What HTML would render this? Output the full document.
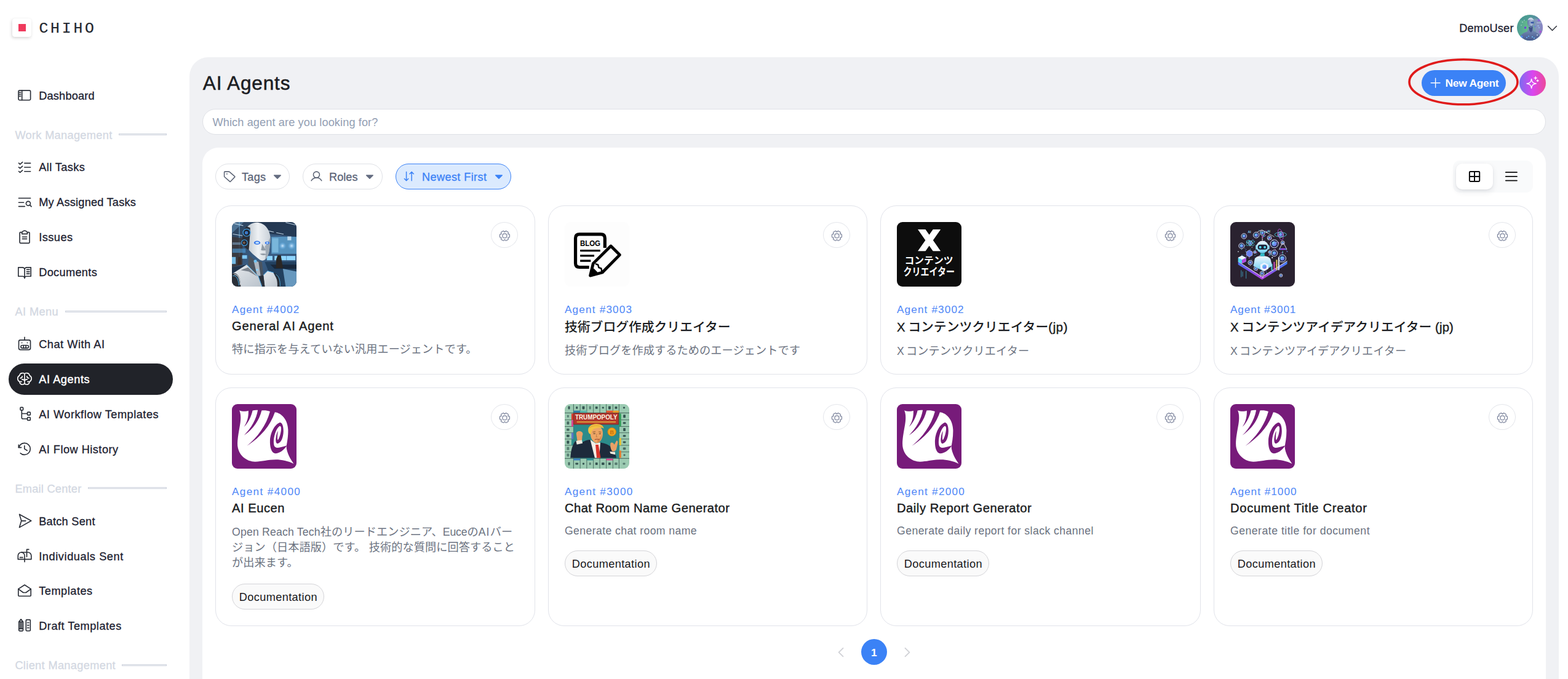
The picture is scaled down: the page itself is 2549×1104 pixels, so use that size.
<!DOCTYPE html>
<html lang="en"><head><meta charset="utf-8"><title>AI Agents - CHIHO</title>
<style>
html,body{margin:0;padding:0}
body{width:2549px;height:1104px;overflow:hidden;background:#fff;font-family:"Liberation Sans",sans-serif;}
#app{position:absolute;left:0;top:0;width:2549px;height:1104px;overflow:hidden}
.a{position:absolute;box-sizing:border-box}
.t{position:absolute;white-space:nowrap;font-family:"Liberation Sans",sans-serif}
.t span{white-space:pre}
svg{display:inline-block}
.ov{position:absolute;left:0;top:0;pointer-events:none}
.card{position:absolute;box-sizing:border-box;border:1px solid #e1e3ea;border-radius:26px;background:#fff}
.gear{position:absolute;box-sizing:border-box;width:44px;height:42px;border:1px solid #e4e6eb;border-radius:50%;background:#fff}
.pill{position:absolute;box-sizing:border-box;border:1px solid #dfe1e6;border-radius:21px;background:#fff}
.tag{position:absolute;box-sizing:border-box;border:1px solid #d4d4d8;border-radius:21px;background:#fafafa;height:41.5px}
.img{position:absolute;width:105px;height:105px;border-radius:9px;overflow:hidden}
.cj{font-family:"Liberation Sans","Noto Sans CJK JP",sans-serif}
.cd{font-size:18.2px;letter-spacing:0.07px;color:#6b7280}
.ct{font-size:20.8px;font-weight:500;color:#191b20}

</style></head>
<body>
<div id="app">
<div class="a" style="left:20px;top:30px;width:31px;height:30px;background:#fff;border-radius:4px;box-shadow:-1px 2px 5px rgba(0,0,0,.16),0 0 1px rgba(0,0,0,.08)"></div><div class="a" style="left:30px;top:39px;width:11.6px;height:11.6px;background:#ef3a5d"></div><div class="t" style="left:63.4px;top:31px;height:30px;line-height:30px;font-family:'Liberation Mono',monospace;font-size:24.7px;letter-spacing:3.85px;color:#23272f;-webkit-text-stroke:.25px #23272f">CHIHO</div><div class="a" style="left:14px;top:591px;width:267px;height:50.6px;background:#212329;border-radius:25.3px"></div><div class="a" style="left:308px;top:93px;width:2226px;height:1050px;background:#f0f1f4;border-radius:31px 31px 0 0"></div><div class="a" style="left:329px;top:177px;width:2184px;height:42px;background:#fff;border:1px solid #dfe1e6;border-radius:21px"></div><div class="a" style="left:329px;top:240px;width:2184px;height:900px;background:#fff;border-radius:26px 26px 0 0"></div><div class="pill" style="left:350px;top:266px;width:121px;height:42px"></div><div class="pill" style="left:492px;top:266px;width:130px;height:42px"></div><div class="pill" style="left:643px;top:266px;width:188px;height:42px;background:#dbeafe;border-color:#3b82f6"></div><div class="a" style="left:2362px;top:261px;width:130px;height:52px;background:#f9fafb;border-radius:11px"></div><div class="a" style="left:2367px;top:266px;width:60px;height:42px;background:#fff;border-radius:10px;box-shadow:0 4px 10px rgba(30,40,60,.10),0 1px 3px rgba(30,40,60,.06)"></div><div class="a" style="left:2311px;top:114px;width:137px;height:42px;background:#3b82f6;border-radius:21px"></div><div class="a" style="left:2470px;top:114px;width:43px;height:42px;border-radius:50%;background:linear-gradient(90deg,#7b6cf0 0%,#d946ef 50%,#ec4899 100%)"></div><div class="a" style="left:1400px;top:1039px;width:42px;height:42px;background:#3b82f6;border-radius:50%"></div><div class="card" style="left:350px;top:334px;width:520px;height:275px"></div><div class="gear" style="left:798px;top:361px"></div><div class="card" style="left:891px;top:334px;width:519px;height:275px"></div><div class="gear" style="left:1338px;top:361px"></div><div class="card" style="left:1431px;top:334px;width:521px;height:275px"></div><div class="gear" style="left:1880px;top:361px"></div><div class="card" style="left:1973px;top:334px;width:519px;height:275px"></div><div class="gear" style="left:2420px;top:361px"></div><div class="card" style="left:350px;top:630px;width:520px;height:388px"></div><div class="gear" style="left:798px;top:657px"></div><div class="tag" style="left:377px;top:949.3px;width:150px"></div><div class="card" style="left:891px;top:630px;width:519px;height:388px"></div><div class="gear" style="left:1338px;top:657px"></div><div class="tag" style="left:918px;top:895.3px;width:150px"></div><div class="card" style="left:1431px;top:630px;width:521px;height:388px"></div><div class="gear" style="left:1880px;top:657px"></div><div class="tag" style="left:1458px;top:895.3px;width:150px"></div><div class="card" style="left:1973px;top:630px;width:519px;height:388px"></div><div class="gear" style="left:2420px;top:657px"></div><div class="tag" style="left:2000px;top:895.3px;width:150px"></div><div class="a" style="left:192.9px;top:216.9px;width:78.1px;height:3.3px;border:1px solid #cfd4de;background:#f1f3f6"></div><div class="a" style="left:106px;top:504.7px;width:165px;height:3.3px;border:1px solid #cfd4de;background:#f1f3f6"></div><div class="a" style="left:143.2px;top:791.9px;width:127.8px;height:3.3px;border:1px solid #cfd4de;background:#f1f3f6"></div><div class="a" style="left:198.1px;top:1080px;width:72.9px;height:3.3px;border:1px solid #cfd4de;background:#f1f3f6"></div><div class="t" style="left:2372.2px;top:34px;height:24px;line-height:24px;font-size:18.16px;"><span style="font-size:18.16px;letter-spacing:0.211px;color:#1c2130;-webkit-text-stroke:0.3px #1c2130;">DemoUser</span></div>
<div class="t" style="left:63.2px;top:144px;height:24px;line-height:24px;font-size:18.16px;"><span style="font-size:18.16px;letter-spacing:0.214px;color:#1c2130;-webkit-text-stroke:0.3px #1c2130;">Dashboard</span></div>
<div class="t" style="left:63.2px;top:260px;height:24px;line-height:24px;font-size:18.16px;"><span style="font-size:18.16px;letter-spacing:0.420px;color:#1c2130;-webkit-text-stroke:0.3px #1c2130;">All Tasks</span></div>
<div class="t" style="left:63.2px;top:317px;height:24px;line-height:24px;font-size:18.16px;"><span style="font-size:18.16px;letter-spacing:0.227px;color:#1c2130;-webkit-text-stroke:0.3px #1c2130;">My Assigned Tasks</span></div>
<div class="t" style="left:63.2px;top:374px;height:24px;line-height:24px;font-size:18.16px;"><span style="font-size:18.16px;letter-spacing:0.495px;color:#1c2130;-webkit-text-stroke:0.3px #1c2130;">Issues</span></div>
<div class="t" style="left:63.2px;top:431px;height:24px;line-height:24px;font-size:18.16px;"><span style="font-size:18.16px;letter-spacing:0.344px;color:#1c2130;-webkit-text-stroke:0.3px #1c2130;">Documents</span></div>
<div class="t" style="left:63.2px;top:548px;height:24px;line-height:24px;font-size:18.16px;"><span style="font-size:18.16px;letter-spacing:0.535px;color:#1c2130;-webkit-text-stroke:0.3px #1c2130;">Chat With AI</span></div>
<div class="t" style="left:63.2px;top:605px;height:24px;line-height:24px;font-size:18.16px;"><span style="font-size:18.16px;letter-spacing:0.594px;color:#ffffff;-webkit-text-stroke:0.45px #ffffff;">AI Agents</span></div>
<div class="t" style="left:63.2px;top:662px;height:24px;line-height:24px;font-size:18.16px;"><span style="font-size:18.16px;letter-spacing:0.523px;color:#1c2130;-webkit-text-stroke:0.3px #1c2130;">AI Workflow Templates</span></div>
<div class="t" style="left:63.2px;top:719px;height:24px;line-height:24px;font-size:18.16px;"><span style="font-size:18.16px;letter-spacing:0.487px;color:#1c2130;-webkit-text-stroke:0.3px #1c2130;">AI Flow History</span></div>
<div class="t" style="left:63.2px;top:836px;height:24px;line-height:24px;font-size:18.16px;"><span style="font-size:18.16px;letter-spacing:0.273px;color:#1c2130;-webkit-text-stroke:0.3px #1c2130;">Batch Sent</span></div>
<div class="t" style="left:63.2px;top:893px;height:24px;line-height:24px;font-size:18.16px;"><span style="font-size:18.16px;letter-spacing:0.595px;color:#1c2130;-webkit-text-stroke:0.3px #1c2130;">Individuals Sent</span></div>
<div class="t" style="left:63.2px;top:949px;height:24px;line-height:24px;font-size:18.16px;"><span style="font-size:18.16px;letter-spacing:0.533px;color:#1c2130;-webkit-text-stroke:0.3px #1c2130;">Templates</span></div>
<div class="t" style="left:63.2px;top:1006px;height:24px;line-height:24px;font-size:18.16px;"><span style="font-size:18.16px;letter-spacing:0.521px;color:#1c2130;-webkit-text-stroke:0.3px #1c2130;">Draft Templates</span></div>
<div class="t" style="left:24.4px;top:208px;height:24px;line-height:24px;font-size:18.16px;"><span style="font-size:18.16px;letter-spacing:0.339px;color:#d3d8e2;-webkit-text-stroke:0.3px #d3d8e2;">Work Management</span></div>
<div class="t" style="left:24.4px;top:495px;height:24px;line-height:24px;font-size:18.16px;"><span style="font-size:18.16px;letter-spacing:0.434px;color:#d3d8e2;-webkit-text-stroke:0.3px #d3d8e2;">AI Menu</span></div>
<div class="t" style="left:24.4px;top:783px;height:24px;line-height:24px;font-size:18.16px;"><span style="font-size:18.16px;letter-spacing:0.262px;color:#d3d8e2;-webkit-text-stroke:0.3px #d3d8e2;">Email Center</span></div>
<div class="t" style="left:24.4px;top:1070px;height:24px;line-height:24px;font-size:18.16px;"><span style="font-size:18.16px;letter-spacing:0.364px;color:#d3d8e2;-webkit-text-stroke:0.3px #d3d8e2;">Client Management</span></div>
<div class="t" style="left:329.8px;top:114.5px;height:41px;line-height:41px;font-size:31.62px;"><span style="font-size:31.62px;letter-spacing:0.799px;color:#1b1d22;-webkit-text-stroke:0.5px #1b1d22;">AI Agents</span></div>
<div class="t" style="left:345.5px;top:187px;height:24px;line-height:24px;font-size:18.16px;"><span style="font-size:18.16px;letter-spacing:0.111px;color:#929eb3;">Which agent are you looking for?</span></div>
<div class="t" style="left:393px;top:276px;height:24px;line-height:24px;font-size:18.16px;"><span style="font-size:18.16px;letter-spacing:0.266px;color:#5b6478;-webkit-text-stroke:0.3px #5b6478;">Tags</span></div>
<div class="t" style="left:535px;top:276px;height:24px;line-height:24px;font-size:18.16px;"><span style="font-size:18.16px;letter-spacing:0.028px;color:#5b6478;-webkit-text-stroke:0.3px #5b6478;">Roles</span></div>
<div class="t" style="left:686px;top:276px;height:24px;line-height:24px;font-size:18.16px;"><span style="font-size:18.16px;letter-spacing:0.375px;color:#3b82f6;-webkit-text-stroke:0.3px #3b82f6;">Newest First</span></div>
<div class="t" style="left:2349.6px;top:123px;height:24px;line-height:24px;font-size:18.16px;"><span style="font-size:17.41px;letter-spacing:-0.291px;color:#ffffff;font-weight:700;">New Agent</span></div>
<div class="t" style="left:1415.88px;top:1049px;height:24px;line-height:24px;font-size:18.16px;"><span style="font-size:17.41px;letter-spacing:-1.438px;color:#ffffff;font-weight:700;">1</span></div>
<div class="t" style="left:388.8px;top:959px;height:24px;line-height:24px;font-size:18.16px;"><span style="font-size:18.16px;letter-spacing:0.383px;color:#18181b;">Documentation</span></div>
<div class="t" style="left:929.8px;top:905px;height:24px;line-height:24px;font-size:18.16px;"><span style="font-size:18.16px;letter-spacing:0.383px;color:#18181b;">Documentation</span></div>
<div class="t" style="left:1469.8px;top:905px;height:24px;line-height:24px;font-size:18.16px;"><span style="font-size:18.16px;letter-spacing:0.383px;color:#18181b;">Documentation</span></div>
<div class="t" style="left:2011.8px;top:905px;height:24px;line-height:24px;font-size:18.16px;"><span style="font-size:18.16px;letter-spacing:0.383px;color:#18181b;">Documentation</span></div>
<div class="t" style="left:377px;top:492px;height:22px;line-height:22px;font-size:17.15px;"><span style="font-size:17.15px;letter-spacing:1.203px;color:#4d86f7;">Agent #4002</span></div>
<div class="t" style="left:377px;top:517px;height:26px;line-height:26px;font-size:20.18px;"><span style="font-size:20.18px;letter-spacing:0.827px;color:#191b20;-webkit-text-stroke:0.4px #191b20;">General AI Agent</span></div>
<div class="t cj" style="left:377px;top:557.2px;height:23px;line-height:23px;font-size:18.2px;"><span class="cj cd">特に指示を与えていない汎用エージェントです。</span></div>
<div class="t" style="left:918px;top:492px;height:22px;line-height:22px;font-size:17.15px;"><span style="font-size:17.15px;letter-spacing:1.186px;color:#4d86f7;">Agent #3003</span></div>
<div class="t cj" style="left:918px;top:518.8px;height:26px;line-height:26px;font-size:20.8px;"><span class="cj ct">技術ブログ作成クリエイター</span></div>
<div class="t cj" style="left:918px;top:559.2px;height:23px;line-height:23px;font-size:18.2px;"><span class="cj cd">技術ブログを作成するためのエージェントです</span></div>
<div class="t" style="left:1458px;top:492px;height:22px;line-height:22px;font-size:17.15px;"><span style="font-size:17.15px;letter-spacing:1.142px;color:#4d86f7;">Agent #3002</span></div>
<div class="t" style="left:1458px;top:519px;height:26px;line-height:26px;font-size:20.18px;"><span style="font-size:20.18px;letter-spacing:-0.395px;color:#191b20;-webkit-text-stroke:0.4px #191b20;">X </span><span class="cj ct">コンテンツクリエイター</span><span style="font-size:20.18px;letter-spacing:0.703px;color:#191b20;-webkit-text-stroke:0.4px #191b20;">(jp)</span></div>
<div class="t" style="left:1458px;top:559.5px;height:23px;line-height:23px;font-size:17.65px;"><span style="font-size:17.65px;letter-spacing:-0.817px;color:#6b7280;">X </span><span class="cj cd">コンテンツクリエイター</span></div>
<div class="t" style="left:2000px;top:492px;height:22px;line-height:22px;font-size:17.15px;"><span style="font-size:17.15px;letter-spacing:0.915px;color:#4d86f7;">Agent #3001</span></div>
<div class="t" style="left:2000px;top:519px;height:26px;line-height:26px;font-size:20.18px;"><span style="font-size:20.18px;letter-spacing:-0.395px;color:#191b20;-webkit-text-stroke:0.4px #191b20;">X </span><span class="cj ct">コンテンツアイデアクリエイター</span><span style="font-size:20.18px;letter-spacing:0.166px;color:#191b20;-webkit-text-stroke:0.4px #191b20;"> (jp)</span></div>
<div class="t" style="left:2000px;top:559.5px;height:23px;line-height:23px;font-size:17.65px;"><span style="font-size:17.65px;letter-spacing:-0.817px;color:#6b7280;">X </span><span class="cj cd">コンテンツアイデアクリエイター</span></div>
<div class="t" style="left:377px;top:788px;height:22px;line-height:22px;font-size:17.15px;"><span style="font-size:17.15px;letter-spacing:1.364px;color:#4d86f7;">Agent #4000</span></div>
<div class="t" style="left:377px;top:813px;height:26px;line-height:26px;font-size:20.18px;"><span style="font-size:20.18px;letter-spacing:0.529px;color:#191b20;-webkit-text-stroke:0.4px #191b20;">AI Eucen</span></div>
<div class="t" style="left:377px;top:853.5px;height:23px;line-height:23px;font-size:17.65px;"><span style="font-size:17.65px;letter-spacing:0.190px;color:#6b7280;">Open Reach Tech</span><span class="cj cd">社のリードエンジニア、</span><span style="font-size:17.65px;letter-spacing:-0.152px;color:#6b7280;">Euce</span><span class="cj cd">の</span><span style="font-size:17.65px;letter-spacing:1.172px;color:#6b7280;">AI</span><span class="cj cd">バー</span></div>
<div class="t" style="left:377px;top:878.5px;height:23px;line-height:23px;font-size:17.65px;"><span class="cj cd">ジョン（日本語版）です。</span><span style="font-size:17.65px;letter-spacing:0.438px;color:#6b7280;"> </span><span class="cj cd">技術的な質問に回答すること</span></div>
<div class="t cj" style="left:377px;top:904.2px;height:23px;line-height:23px;font-size:18.2px;"><span class="cj cd">が出来ます。</span></div>
<div class="t" style="left:918px;top:788px;height:22px;line-height:22px;font-size:17.15px;"><span style="font-size:17.15px;letter-spacing:1.303px;color:#4d86f7;">Agent #3000</span></div>
<div class="t" style="left:918px;top:813px;height:26px;line-height:26px;font-size:20.18px;"><span style="font-size:20.18px;letter-spacing:0.437px;color:#191b20;-webkit-text-stroke:0.4px #191b20;">Chat Room Name Generator</span></div>
<div class="t" style="left:918px;top:851.5px;height:23px;line-height:23px;font-size:17.65px;"><span style="font-size:17.65px;letter-spacing:0.392px;color:#6b7280;">Generate chat room name</span></div>
<div class="t" style="left:1458px;top:788px;height:22px;line-height:22px;font-size:17.15px;"><span style="font-size:17.15px;letter-spacing:1.257px;color:#4d86f7;">Agent #2000</span></div>
<div class="t" style="left:1458px;top:813px;height:26px;line-height:26px;font-size:20.18px;"><span style="font-size:20.18px;letter-spacing:0.533px;color:#191b20;-webkit-text-stroke:0.4px #191b20;">Daily Report Generator</span></div>
<div class="t" style="left:1458px;top:851.5px;height:23px;line-height:23px;font-size:17.65px;"><span style="font-size:17.65px;letter-spacing:0.430px;color:#6b7280;">Generate daily report for slack channel</span></div>
<div class="t" style="left:2000px;top:788px;height:22px;line-height:22px;font-size:17.15px;"><span style="font-size:17.15px;letter-spacing:1.031px;color:#4d86f7;">Agent #1000</span></div>
<div class="t" style="left:2000px;top:813px;height:26px;line-height:26px;font-size:20.18px;"><span style="font-size:20.18px;letter-spacing:0.694px;color:#191b20;-webkit-text-stroke:0.4px #191b20;">Document Title Creator</span></div>
<div class="t" style="left:2000px;top:851.5px;height:23px;line-height:23px;font-size:17.65px;"><span style="font-size:17.65px;letter-spacing:0.492px;color:#6b7280;">Generate title for document</span></div><svg class="ov" width="2549" height="1104" viewBox="0 0 2549 1104" fill="none" stroke-linecap="round" stroke-linejoin="round"><g stroke="#2a2e37" stroke-width="1.65"><rect x="30" y="147.1" width="19.6" height="15.6" rx="1.6"/><path d="M35.7 147.1V162.7M31.6 150.3h2M31.6 153.3h2M31.6 156.4h2"/><path d="M39.8 265.3H49.6M39.8 272H49.6M39.8 278.7H49.6M30.5 265.2l2.1 1.9 4-3.5M30.5 271.8l2.1 1.9 4-3.5M30.5 278.5l2.1 1.9 4-3.5"/><path d="M30.4 322.2H49.6M30.4 329.2H38.6M30.4 335.6H40.3M48.5 333.4L51 335.9"/><circle cx="45.9" cy="330.8" r="3.5"/><path d="M35.6 377.6H33.4a1.3 1.3 0 0 0-1.3 1.3V394a1.3 1.3 0 0 0 1.3 1.3H46.7a1.3 1.3 0 0 0 1.3-1.3V378.9a1.3 1.3 0 0 0-1.3-1.3H44.5"/><path d="M35.6 380.3V379.6a4.45 4.45 0 0 1 8.9 0V380.3Z"/><path d="M36.4 385.2H43.6M36.4 388.3H43.6"/><path d="M40 438.2a3.4 3.4 0 0 0-3.4-3.4H29.8V449.2H36.6a3.4 3.4 0 0 1 3.4 3.4a3.4 3.4 0 0 1 3.4-3.4H50.2V434.8H43.4a3.4 3.4 0 0 0-3.4 3.4V452.6"/><path d="M43.4 438.4H48M43.4 441.8H48M43.4 445.1H48"/><rect x="30.5" y="552.8" width="19" height="15.8" rx="2.6"/><path d="M40 548.2V552.8M38.3 561.5v4.4M42.1 561.5v4.4"/><rect x="33.9" y="561.5" width="12.6" height="4.4" rx="2.2"/><circle cx="35.6" cy="557.3" r="0.9" fill="#2a2e37" stroke="none"/><circle cx="44.4" cy="557.3" r="0.9" fill="#2a2e37" stroke="none"/><rect x="33" y="662.4" width="4.6" height="4.6" rx="1"/><rect x="44.5" y="670.1" width="4.8" height="4.8" rx="1"/><rect x="44.5" y="678.6" width="4.8" height="4.8" rx="1"/><path d="M35.3 667V679a2 2 0 0 0 2 2H44.5M35.3 672.5H44.5"/><path d="M39.8 724.8V729.9L44.1 732.5M34.6 727.6H30.3V723.3"/><path d="M33.2 736.8A9.5 9.5 0 1 0 33 723.2L30.3 727.6"/><path d="M31.5 836.2L50.7 846.8L31.5 857.6L34.8 846.8ZM34.8 846.8H41.8"/><path d="M29.3 909.4V903.6a5.6 5.6 0 0 1 5.6-5.6H45.2a5.6 5.6 0 0 1 5.6 5.6V909.4Z"/><path d="M40 913.6V903.6a5.4 5.4 0 0 0-5.2-5.6M43.5 905.3V893.3H46.9M32.4 906.4H37"/><path d="M29.8 957.6L40 951L50.2 957.6V967.9a1.3 1.3 0 0 1-1.3 1.3H31.1a1.3 1.3 0 0 1-1.3-1.3Z"/><path d="M29.8 957.6L37.8 963.5H42.2L50.2 957.6"/><path d="M30.7 1011L34.1 1006.9L37.5 1011V1024.4a1.4 1.4 0 0 1-1.4 1.4H32.1a1.4 1.4 0 0 1-1.4-1.4ZM30.7 1022.4H37.5M30.7 1011H37.5M32.9 1011V1022.4M35.3 1011V1022.4"/><rect x="42.3" y="1007.6" width="7" height="18.2" rx="1.3"/><path d="M44.6 1012.5h2.3M44.6 1016.6h2.3M44.6 1020.7h2.3"/></g><g stroke="#ffffff" stroke-width="1.6"><path d="M39.95 608.21C39.01 606.47 37.22 606.24 35.81 606.65C33.56 607.11 32.05 608.58 31.87 610.51C29.7 611.53 28.67 613.55 28.76 615.48C28.76 618.06 30.08 619.81 31.96 620.63C31.87 623.21 33.84 625.19 36.28 625.19C38.07 625.19 39.67 624.13 39.95 622.66M32.9 614.84C34.78 614.84 36.1 613.46 36.1 611.8M39.95 619.16C39.48 617.69 37.88 616.86 35.63 616.86M31.96 620.63L35.06 620.63M39.95 608.21C40.89 606.47 42.68 606.24 44.09 606.65C46.34 607.11 47.85 608.58 48.03 610.51C50.2 611.53 51.23 613.55 51.14 615.48C51.14 618.06 49.82 619.81 47.94 620.63C48.03 623.21 46.06 625.19 43.62 625.19C41.83 625.19 40.23 624.13 39.95 622.66M47 614.84C45.12 614.84 43.8 613.46 43.8 611.8M39.95 619.16C40.42 617.69 42.02 616.86 44.27 616.86M47.94 620.63L44.84 620.63M39.95 608.2V623.7"/></g><path d="M2516.6 42.4L2523.5 49.6L2530.4 42.4" stroke="#2a2e37" stroke-width="1.4"/><g stroke="#5c6475" stroke-width="1.55"><path d="M365.4 279.1H372.3a1 1 0 0 1 .7.3L381.6 286.8a.8.8 0 0 1 0 1.1L374.6 295.2a.8.8 0 0 1-1.1 0L364.9 287.5a1 1 0 0 1-.3-.7V279.9a.8.8 0 0 1 .8-.8Z"/><circle cx="368.9" cy="282.8" r="0.95" fill="#5c6475" stroke="none"/><circle cx="514.45" cy="284.1" r="5.0"/><path d="M506.1 293.8C507.8 290.6 510.8 289 514.45 289S521.1 290.6 522.8 293.8"/></g><path d="M445.6 284.2H456.3a.7.7 0 0 1 .5 1.2L451.5 290.8a.8.8 0 0 1-1.1 0L445.1 285.4a.7.7 0 0 1 .5-1.2Z" fill="#646c80"/><path d="M595.6 284.2H606.3a.7.7 0 0 1 .5 1.2L601.5 290.8a.8.8 0 0 1-1.1 0L595.1 285.4a.7.7 0 0 1 .5-1.2Z" fill="#646c80"/><path d="M805.6 284.2H816.3a.7.7 0 0 1 .5 1.2L811.5 290.8a.8.8 0 0 1-1.1 0L805.1 285.4a.7.7 0 0 1 .5-1.2Z" fill="#3b82f6"/><path d="M660.6 279.5V293.8M657.4 290.5L660.6 293.8L663.8 290.5M669.2 293.8V279.5M666 282.8L669.2 279.5L672.4 282.8" stroke="#3b82f6" stroke-width="1.5"/><rect x="2388.9" y="278.9" width="16.3" height="16" rx="1.3" stroke="#0c0c0d" stroke-width="2"/><path d="M2397 278.9V294.9M2388.9 286.9H2405.2" stroke="#0c0c0d" stroke-width="2"/><path d="M2447.8 280.2H2466M2447.8 286.9H2466M2447.8 293.6H2466" stroke="#0c0c0d" stroke-width="1.7"/><path d="M2326.2 134.7H2341M2333.6 127.2V142.2" stroke="#fff" stroke-width="1.35"/><g stroke="#fff" stroke-width="1.35"><path d="M2489.6 128.4C2490.2 133.4 2491.6 134.9 2497.3 135.9C2491.6 136.9 2490.2 138.4 2489.6 143.6C2489 138.4 2487.6 136.9 2481.9 135.9C2487.6 134.9 2489 133.4 2489.6 128.4Z"/><path d="M2496.2 124.6V129M2494 126.8H2498.4M2499.6 129.8V132.6M2498.2 131.2H2501"/></g><ellipse cx="2379" cy="133.3" rx="88" ry="36.5" stroke="#e01b1b" stroke-width="3.6"/><path d="M1370.5 1053.8L1363.6 1060.6L1370.5 1067.4M1471.5 1053.8L1478.4 1060.6L1471.5 1067.4" stroke="#d0d1d6" stroke-width="1.8"/><g stroke="#79819a" stroke-width="1.2"><path d="M828.45 383.4 L828.45 382.98 L828.45 382.56 L828.44 382.13 L828.42 381.71 L828.32 381.29 L828.05 380.93 L827.51 380.69 L826.73 380.6 L826.01 380.57 L825.77 380.33 L825.68 380 L826.01 379.36 L826.32 378.64 L826.39 378.05 L826.21 377.64 L825.9 377.35 L825.54 377.11 L825.18 376.89 L824.81 376.68 L824.45 376.47 L824.09 376.26 L823.72 376.05 L823.35 375.84 L822.97 375.65 L822.56 375.53 L822.11 375.59 L821.63 375.93 L821.17 376.56 L820.78 377.17 L820.45 377.26 L820.12 377.17 L819.73 376.56 L819.27 375.93 L818.79 375.59 L818.34 375.53 L817.93 375.65 L817.55 375.84 L817.18 376.05 L816.81 376.26 L816.45 376.47 L816.09 376.68 L815.72 376.89 L815.36 377.11 L815 377.35 L814.69 377.64 L814.51 378.05 L814.58 378.64 L814.89 379.36 L815.22 380 L815.13 380.33 L814.89 380.57 L814.17 380.6 L813.39 380.69 L812.85 380.93 L812.58 381.29 L812.48 381.71 L812.46 382.13 L812.45 382.56 L812.45 382.98 L812.45 383.4 L812.45 383.82 L812.45 384.24 L812.46 384.67 L812.48 385.09 L812.58 385.51 L812.85 385.87 L813.39 386.11 L814.17 386.2 L814.89 386.23 L815.13 386.47 L815.22 386.8 L814.89 387.44 L814.58 388.16 L814.51 388.75 L814.69 389.16 L815 389.45 L815.36 389.69 L815.72 389.91 L816.09 390.12 L816.45 390.33 L816.81 390.54 L817.18 390.75 L817.55 390.96 L817.93 391.15 L818.34 391.27 L818.79 391.21 L819.27 390.87 L819.73 390.24 L820.12 389.63 L820.45 389.54 L820.78 389.63 L821.17 390.24 L821.63 390.87 L822.11 391.21 L822.56 391.27 L822.97 391.15 L823.35 390.96 L823.72 390.75 L824.09 390.54 L824.45 390.33 L824.81 390.12 L825.18 389.91 L825.54 389.69 L825.9 389.45 L826.21 389.16 L826.39 388.75 L826.32 388.16 L826.01 387.44 L825.68 386.8 L825.77 386.47 L826.01 386.23 L826.73 386.2 L827.51 386.11 L828.05 385.87 L828.32 385.51 L828.42 385.09 L828.44 384.67 L828.45 384.24 L828.45 383.82Z"/><circle cx="820.45" cy="383.4" r="3.5"/><path d="M1368.45 383.4 L1368.45 382.98 L1368.45 382.56 L1368.44 382.13 L1368.42 381.71 L1368.32 381.29 L1368.05 380.93 L1367.51 380.69 L1366.73 380.6 L1366.01 380.57 L1365.77 380.33 L1365.68 380 L1366.01 379.36 L1366.32 378.64 L1366.39 378.05 L1366.21 377.64 L1365.9 377.35 L1365.54 377.11 L1365.18 376.89 L1364.81 376.68 L1364.45 376.47 L1364.09 376.26 L1363.72 376.05 L1363.35 375.84 L1362.97 375.65 L1362.56 375.53 L1362.11 375.59 L1361.63 375.93 L1361.17 376.56 L1360.78 377.17 L1360.45 377.26 L1360.12 377.17 L1359.73 376.56 L1359.27 375.93 L1358.79 375.59 L1358.34 375.53 L1357.93 375.65 L1357.55 375.84 L1357.18 376.05 L1356.81 376.26 L1356.45 376.47 L1356.09 376.68 L1355.72 376.89 L1355.36 377.11 L1355 377.35 L1354.69 377.64 L1354.51 378.05 L1354.58 378.64 L1354.89 379.36 L1355.22 380 L1355.13 380.33 L1354.89 380.57 L1354.17 380.6 L1353.39 380.69 L1352.85 380.93 L1352.58 381.29 L1352.48 381.71 L1352.46 382.13 L1352.45 382.56 L1352.45 382.98 L1352.45 383.4 L1352.45 383.82 L1352.45 384.24 L1352.46 384.67 L1352.48 385.09 L1352.58 385.51 L1352.85 385.87 L1353.39 386.11 L1354.17 386.2 L1354.89 386.23 L1355.13 386.47 L1355.22 386.8 L1354.89 387.44 L1354.58 388.16 L1354.51 388.75 L1354.69 389.16 L1355 389.45 L1355.36 389.69 L1355.72 389.91 L1356.09 390.12 L1356.45 390.33 L1356.81 390.54 L1357.18 390.75 L1357.55 390.96 L1357.93 391.15 L1358.34 391.27 L1358.79 391.21 L1359.27 390.87 L1359.73 390.24 L1360.12 389.63 L1360.45 389.54 L1360.78 389.63 L1361.17 390.24 L1361.63 390.87 L1362.11 391.21 L1362.56 391.27 L1362.97 391.15 L1363.35 390.96 L1363.72 390.75 L1364.09 390.54 L1364.45 390.33 L1364.81 390.12 L1365.18 389.91 L1365.54 389.69 L1365.9 389.45 L1366.21 389.16 L1366.39 388.75 L1366.32 388.16 L1366.01 387.44 L1365.68 386.8 L1365.77 386.47 L1366.01 386.23 L1366.73 386.2 L1367.51 386.11 L1368.05 385.87 L1368.32 385.51 L1368.42 385.09 L1368.44 384.67 L1368.45 384.24 L1368.45 383.82Z"/><circle cx="1360.45" cy="383.4" r="3.5"/><path d="M1910.45 383.4 L1910.45 382.98 L1910.45 382.56 L1910.44 382.13 L1910.42 381.71 L1910.32 381.29 L1910.05 380.93 L1909.51 380.69 L1908.73 380.6 L1908.01 380.57 L1907.77 380.33 L1907.68 380 L1908.01 379.36 L1908.32 378.64 L1908.39 378.05 L1908.21 377.64 L1907.9 377.35 L1907.54 377.11 L1907.18 376.89 L1906.81 376.68 L1906.45 376.47 L1906.09 376.26 L1905.72 376.05 L1905.35 375.84 L1904.97 375.65 L1904.56 375.53 L1904.11 375.59 L1903.63 375.93 L1903.17 376.56 L1902.78 377.17 L1902.45 377.26 L1902.12 377.17 L1901.73 376.56 L1901.27 375.93 L1900.79 375.59 L1900.34 375.53 L1899.93 375.65 L1899.55 375.84 L1899.18 376.05 L1898.81 376.26 L1898.45 376.47 L1898.09 376.68 L1897.72 376.89 L1897.36 377.11 L1897 377.35 L1896.69 377.64 L1896.51 378.05 L1896.58 378.64 L1896.89 379.36 L1897.22 380 L1897.13 380.33 L1896.89 380.57 L1896.17 380.6 L1895.39 380.69 L1894.85 380.93 L1894.58 381.29 L1894.48 381.71 L1894.46 382.13 L1894.45 382.56 L1894.45 382.98 L1894.45 383.4 L1894.45 383.82 L1894.45 384.24 L1894.46 384.67 L1894.48 385.09 L1894.58 385.51 L1894.85 385.87 L1895.39 386.11 L1896.17 386.2 L1896.89 386.23 L1897.13 386.47 L1897.22 386.8 L1896.89 387.44 L1896.58 388.16 L1896.51 388.75 L1896.69 389.16 L1897 389.45 L1897.36 389.69 L1897.72 389.91 L1898.09 390.12 L1898.45 390.33 L1898.81 390.54 L1899.18 390.75 L1899.55 390.96 L1899.93 391.15 L1900.34 391.27 L1900.79 391.21 L1901.27 390.87 L1901.73 390.24 L1902.12 389.63 L1902.45 389.54 L1902.78 389.63 L1903.17 390.24 L1903.63 390.87 L1904.11 391.21 L1904.56 391.27 L1904.97 391.15 L1905.35 390.96 L1905.72 390.75 L1906.09 390.54 L1906.45 390.33 L1906.81 390.12 L1907.18 389.91 L1907.54 389.69 L1907.9 389.45 L1908.21 389.16 L1908.39 388.75 L1908.32 388.16 L1908.01 387.44 L1907.68 386.8 L1907.77 386.47 L1908.01 386.23 L1908.73 386.2 L1909.51 386.11 L1910.05 385.87 L1910.32 385.51 L1910.42 385.09 L1910.44 384.67 L1910.45 384.24 L1910.45 383.82Z"/><circle cx="1902.45" cy="383.4" r="3.5"/><path d="M2450.45 383.4 L2450.45 382.98 L2450.45 382.56 L2450.44 382.13 L2450.42 381.71 L2450.32 381.29 L2450.05 380.93 L2449.51 380.69 L2448.73 380.6 L2448.01 380.57 L2447.77 380.33 L2447.68 380 L2448.01 379.36 L2448.32 378.64 L2448.39 378.05 L2448.21 377.64 L2447.9 377.35 L2447.54 377.11 L2447.18 376.89 L2446.81 376.68 L2446.45 376.47 L2446.09 376.26 L2445.72 376.05 L2445.35 375.84 L2444.97 375.65 L2444.56 375.53 L2444.11 375.59 L2443.63 375.93 L2443.17 376.56 L2442.78 377.17 L2442.45 377.26 L2442.12 377.17 L2441.73 376.56 L2441.27 375.93 L2440.79 375.59 L2440.34 375.53 L2439.93 375.65 L2439.55 375.84 L2439.18 376.05 L2438.81 376.26 L2438.45 376.47 L2438.09 376.68 L2437.72 376.89 L2437.36 377.11 L2437 377.35 L2436.69 377.64 L2436.51 378.05 L2436.58 378.64 L2436.89 379.36 L2437.22 380 L2437.13 380.33 L2436.89 380.57 L2436.17 380.6 L2435.39 380.69 L2434.85 380.93 L2434.58 381.29 L2434.48 381.71 L2434.46 382.13 L2434.45 382.56 L2434.45 382.98 L2434.45 383.4 L2434.45 383.82 L2434.45 384.24 L2434.46 384.67 L2434.48 385.09 L2434.58 385.51 L2434.85 385.87 L2435.39 386.11 L2436.17 386.2 L2436.89 386.23 L2437.13 386.47 L2437.22 386.8 L2436.89 387.44 L2436.58 388.16 L2436.51 388.75 L2436.69 389.16 L2437 389.45 L2437.36 389.69 L2437.72 389.91 L2438.09 390.12 L2438.45 390.33 L2438.81 390.54 L2439.18 390.75 L2439.55 390.96 L2439.93 391.15 L2440.34 391.27 L2440.79 391.21 L2441.27 390.87 L2441.73 390.24 L2442.12 389.63 L2442.45 389.54 L2442.78 389.63 L2443.17 390.24 L2443.63 390.87 L2444.11 391.21 L2444.56 391.27 L2444.97 391.15 L2445.35 390.96 L2445.72 390.75 L2446.09 390.54 L2446.45 390.33 L2446.81 390.12 L2447.18 389.91 L2447.54 389.69 L2447.9 389.45 L2448.21 389.16 L2448.39 388.75 L2448.32 388.16 L2448.01 387.44 L2447.68 386.8 L2447.77 386.47 L2448.01 386.23 L2448.73 386.2 L2449.51 386.11 L2450.05 385.87 L2450.32 385.51 L2450.42 385.09 L2450.44 384.67 L2450.45 384.24 L2450.45 383.82Z"/><circle cx="2442.45" cy="383.4" r="3.5"/><path d="M828.45 679.4 L828.45 678.98 L828.45 678.56 L828.44 678.13 L828.42 677.71 L828.32 677.29 L828.05 676.93 L827.51 676.69 L826.73 676.6 L826.01 676.57 L825.77 676.33 L825.68 676 L826.01 675.36 L826.32 674.64 L826.39 674.05 L826.21 673.64 L825.9 673.35 L825.54 673.11 L825.18 672.89 L824.81 672.68 L824.45 672.47 L824.09 672.26 L823.72 672.05 L823.35 671.84 L822.97 671.65 L822.56 671.53 L822.11 671.59 L821.63 671.93 L821.17 672.56 L820.78 673.17 L820.45 673.26 L820.12 673.17 L819.73 672.56 L819.27 671.93 L818.79 671.59 L818.34 671.53 L817.93 671.65 L817.55 671.84 L817.18 672.05 L816.81 672.26 L816.45 672.47 L816.09 672.68 L815.72 672.89 L815.36 673.11 L815 673.35 L814.69 673.64 L814.51 674.05 L814.58 674.64 L814.89 675.36 L815.22 676 L815.13 676.33 L814.89 676.57 L814.17 676.6 L813.39 676.69 L812.85 676.93 L812.58 677.29 L812.48 677.71 L812.46 678.13 L812.45 678.56 L812.45 678.98 L812.45 679.4 L812.45 679.82 L812.45 680.24 L812.46 680.67 L812.48 681.09 L812.58 681.51 L812.85 681.87 L813.39 682.11 L814.17 682.2 L814.89 682.23 L815.13 682.47 L815.22 682.8 L814.89 683.44 L814.58 684.16 L814.51 684.75 L814.69 685.16 L815 685.45 L815.36 685.69 L815.72 685.91 L816.09 686.12 L816.45 686.33 L816.81 686.54 L817.18 686.75 L817.55 686.96 L817.93 687.15 L818.34 687.27 L818.79 687.21 L819.27 686.87 L819.73 686.24 L820.12 685.63 L820.45 685.54 L820.78 685.63 L821.17 686.24 L821.63 686.87 L822.11 687.21 L822.56 687.27 L822.97 687.15 L823.35 686.96 L823.72 686.75 L824.09 686.54 L824.45 686.33 L824.81 686.12 L825.18 685.91 L825.54 685.69 L825.9 685.45 L826.21 685.16 L826.39 684.75 L826.32 684.16 L826.01 683.44 L825.68 682.8 L825.77 682.47 L826.01 682.23 L826.73 682.2 L827.51 682.11 L828.05 681.87 L828.32 681.51 L828.42 681.09 L828.44 680.67 L828.45 680.24 L828.45 679.82Z"/><circle cx="820.45" cy="679.4" r="3.5"/><path d="M1368.45 679.4 L1368.45 678.98 L1368.45 678.56 L1368.44 678.13 L1368.42 677.71 L1368.32 677.29 L1368.05 676.93 L1367.51 676.69 L1366.73 676.6 L1366.01 676.57 L1365.77 676.33 L1365.68 676 L1366.01 675.36 L1366.32 674.64 L1366.39 674.05 L1366.21 673.64 L1365.9 673.35 L1365.54 673.11 L1365.18 672.89 L1364.81 672.68 L1364.45 672.47 L1364.09 672.26 L1363.72 672.05 L1363.35 671.84 L1362.97 671.65 L1362.56 671.53 L1362.11 671.59 L1361.63 671.93 L1361.17 672.56 L1360.78 673.17 L1360.45 673.26 L1360.12 673.17 L1359.73 672.56 L1359.27 671.93 L1358.79 671.59 L1358.34 671.53 L1357.93 671.65 L1357.55 671.84 L1357.18 672.05 L1356.81 672.26 L1356.45 672.47 L1356.09 672.68 L1355.72 672.89 L1355.36 673.11 L1355 673.35 L1354.69 673.64 L1354.51 674.05 L1354.58 674.64 L1354.89 675.36 L1355.22 676 L1355.13 676.33 L1354.89 676.57 L1354.17 676.6 L1353.39 676.69 L1352.85 676.93 L1352.58 677.29 L1352.48 677.71 L1352.46 678.13 L1352.45 678.56 L1352.45 678.98 L1352.45 679.4 L1352.45 679.82 L1352.45 680.24 L1352.46 680.67 L1352.48 681.09 L1352.58 681.51 L1352.85 681.87 L1353.39 682.11 L1354.17 682.2 L1354.89 682.23 L1355.13 682.47 L1355.22 682.8 L1354.89 683.44 L1354.58 684.16 L1354.51 684.75 L1354.69 685.16 L1355 685.45 L1355.36 685.69 L1355.72 685.91 L1356.09 686.12 L1356.45 686.33 L1356.81 686.54 L1357.18 686.75 L1357.55 686.96 L1357.93 687.15 L1358.34 687.27 L1358.79 687.21 L1359.27 686.87 L1359.73 686.24 L1360.12 685.63 L1360.45 685.54 L1360.78 685.63 L1361.17 686.24 L1361.63 686.87 L1362.11 687.21 L1362.56 687.27 L1362.97 687.15 L1363.35 686.96 L1363.72 686.75 L1364.09 686.54 L1364.45 686.33 L1364.81 686.12 L1365.18 685.91 L1365.54 685.69 L1365.9 685.45 L1366.21 685.16 L1366.39 684.75 L1366.32 684.16 L1366.01 683.44 L1365.68 682.8 L1365.77 682.47 L1366.01 682.23 L1366.73 682.2 L1367.51 682.11 L1368.05 681.87 L1368.32 681.51 L1368.42 681.09 L1368.44 680.67 L1368.45 680.24 L1368.45 679.82Z"/><circle cx="1360.45" cy="679.4" r="3.5"/><path d="M1910.45 679.4 L1910.45 678.98 L1910.45 678.56 L1910.44 678.13 L1910.42 677.71 L1910.32 677.29 L1910.05 676.93 L1909.51 676.69 L1908.73 676.6 L1908.01 676.57 L1907.77 676.33 L1907.68 676 L1908.01 675.36 L1908.32 674.64 L1908.39 674.05 L1908.21 673.64 L1907.9 673.35 L1907.54 673.11 L1907.18 672.89 L1906.81 672.68 L1906.45 672.47 L1906.09 672.26 L1905.72 672.05 L1905.35 671.84 L1904.97 671.65 L1904.56 671.53 L1904.11 671.59 L1903.63 671.93 L1903.17 672.56 L1902.78 673.17 L1902.45 673.26 L1902.12 673.17 L1901.73 672.56 L1901.27 671.93 L1900.79 671.59 L1900.34 671.53 L1899.93 671.65 L1899.55 671.84 L1899.18 672.05 L1898.81 672.26 L1898.45 672.47 L1898.09 672.68 L1897.72 672.89 L1897.36 673.11 L1897 673.35 L1896.69 673.64 L1896.51 674.05 L1896.58 674.64 L1896.89 675.36 L1897.22 676 L1897.13 676.33 L1896.89 676.57 L1896.17 676.6 L1895.39 676.69 L1894.85 676.93 L1894.58 677.29 L1894.48 677.71 L1894.46 678.13 L1894.45 678.56 L1894.45 678.98 L1894.45 679.4 L1894.45 679.82 L1894.45 680.24 L1894.46 680.67 L1894.48 681.09 L1894.58 681.51 L1894.85 681.87 L1895.39 682.11 L1896.17 682.2 L1896.89 682.23 L1897.13 682.47 L1897.22 682.8 L1896.89 683.44 L1896.58 684.16 L1896.51 684.75 L1896.69 685.16 L1897 685.45 L1897.36 685.69 L1897.72 685.91 L1898.09 686.12 L1898.45 686.33 L1898.81 686.54 L1899.18 686.75 L1899.55 686.96 L1899.93 687.15 L1900.34 687.27 L1900.79 687.21 L1901.27 686.87 L1901.73 686.24 L1902.12 685.63 L1902.45 685.54 L1902.78 685.63 L1903.17 686.24 L1903.63 686.87 L1904.11 687.21 L1904.56 687.27 L1904.97 687.15 L1905.35 686.96 L1905.72 686.75 L1906.09 686.54 L1906.45 686.33 L1906.81 686.12 L1907.18 685.91 L1907.54 685.69 L1907.9 685.45 L1908.21 685.16 L1908.39 684.75 L1908.32 684.16 L1908.01 683.44 L1907.68 682.8 L1907.77 682.47 L1908.01 682.23 L1908.73 682.2 L1909.51 682.11 L1910.05 681.87 L1910.32 681.51 L1910.42 681.09 L1910.44 680.67 L1910.45 680.24 L1910.45 679.82Z"/><circle cx="1902.45" cy="679.4" r="3.5"/><path d="M2450.45 679.4 L2450.45 678.98 L2450.45 678.56 L2450.44 678.13 L2450.42 677.71 L2450.32 677.29 L2450.05 676.93 L2449.51 676.69 L2448.73 676.6 L2448.01 676.57 L2447.77 676.33 L2447.68 676 L2448.01 675.36 L2448.32 674.64 L2448.39 674.05 L2448.21 673.64 L2447.9 673.35 L2447.54 673.11 L2447.18 672.89 L2446.81 672.68 L2446.45 672.47 L2446.09 672.26 L2445.72 672.05 L2445.35 671.84 L2444.97 671.65 L2444.56 671.53 L2444.11 671.59 L2443.63 671.93 L2443.17 672.56 L2442.78 673.17 L2442.45 673.26 L2442.12 673.17 L2441.73 672.56 L2441.27 671.93 L2440.79 671.59 L2440.34 671.53 L2439.93 671.65 L2439.55 671.84 L2439.18 672.05 L2438.81 672.26 L2438.45 672.47 L2438.09 672.68 L2437.72 672.89 L2437.36 673.11 L2437 673.35 L2436.69 673.64 L2436.51 674.05 L2436.58 674.64 L2436.89 675.36 L2437.22 676 L2437.13 676.33 L2436.89 676.57 L2436.17 676.6 L2435.39 676.69 L2434.85 676.93 L2434.58 677.29 L2434.48 677.71 L2434.46 678.13 L2434.45 678.56 L2434.45 678.98 L2434.45 679.4 L2434.45 679.82 L2434.45 680.24 L2434.46 680.67 L2434.48 681.09 L2434.58 681.51 L2434.85 681.87 L2435.39 682.11 L2436.17 682.2 L2436.89 682.23 L2437.13 682.47 L2437.22 682.8 L2436.89 683.44 L2436.58 684.16 L2436.51 684.75 L2436.69 685.16 L2437 685.45 L2437.36 685.69 L2437.72 685.91 L2438.09 686.12 L2438.45 686.33 L2438.81 686.54 L2439.18 686.75 L2439.55 686.96 L2439.93 687.15 L2440.34 687.27 L2440.79 687.21 L2441.27 686.87 L2441.73 686.24 L2442.12 685.63 L2442.45 685.54 L2442.78 685.63 L2443.17 686.24 L2443.63 686.87 L2444.11 687.21 L2444.56 687.27 L2444.97 687.15 L2445.35 686.96 L2445.72 686.75 L2446.09 686.54 L2446.45 686.33 L2446.81 686.12 L2447.18 685.91 L2447.54 685.69 L2447.9 685.45 L2448.21 685.16 L2448.39 684.75 L2448.32 684.16 L2448.01 683.44 L2447.68 682.8 L2447.77 682.47 L2448.01 682.23 L2448.73 682.2 L2449.51 682.11 L2450.05 681.87 L2450.32 681.51 L2450.42 681.09 L2450.44 680.67 L2450.45 680.24 L2450.45 679.82Z"/><circle cx="2442.45" cy="679.4" r="3.5"/></g></svg><div class="img" style="left:377px;top:361px"><svg width="105" height="105" viewBox="0 0 105 105"><defs><linearGradient id="rb" x1="0" y1="0" x2="1" y2="1"><stop offset="0" stop-color="#2b3f58"/><stop offset=".5" stop-color="#3b5f86"/><stop offset="1" stop-color="#2a4668"/></linearGradient><linearGradient id="rh" x1="0" y1="0" x2="1" y2="0"><stop offset="0" stop-color="#aab4be"/><stop offset=".55" stop-color="#eef1f4"/><stop offset="1" stop-color="#c8d0d8"/></linearGradient><linearGradient id="rc" x1="0" y1="0" x2="1" y2="1"><stop offset="0" stop-color="#e8ebee"/><stop offset="1" stop-color="#b9c2cb"/></linearGradient><radialGradient id="rg"><stop offset="0" stop-color="#cfeaff"/><stop offset="1" stop-color="#4f9fdc" stop-opacity=".2"/></radialGradient></defs><rect width="105" height="105" fill="url(#rb)"/><path d="M0 0H104.96V24L62.5 19.47L35.33 0Z" fill="#1f2f45" opacity=".75"/><path d="M0 0H19.47L0 18.34Z" fill="#5d87ab" opacity=".7"/><path d="M1.36 19.47L27.4 24" stroke="#d8ecfb" stroke-width="1.1" opacity=".85"/><path d="M59.1 14.38L68.16 16.3" stroke="#d8ecfb" stroke-width="1.1" opacity=".85"/><path d="M72.12 17.21L84.01 19.7" stroke="#d8ecfb" stroke-width="1.1" opacity=".85"/><path d="M87.41 0.79L103.26 4.76" stroke="#d8ecfb" stroke-width="1.1" opacity=".85"/><path d="M3.62 2.49L18.34 5.89" stroke="#d8ecfb" stroke-width="1.1" opacity=".85"/><path d="M12.12 0V57.97" stroke="#7fc4ee" stroke-width="1.2" opacity=".7"/><path d="M0 24L17.21 26.27V69.29L0 73.82Z" fill="#3b3436" opacity=".8"/><rect x="0.79" y="33.06" width="13.59" height="3.96" fill="#7fa6c9" opacity=".55"/><rect x="0.79" y="43.25" width="21.51" height="6.79" fill="#4f9fdc" opacity=".6"/><rect x="0" y="56.84" width="6.23" height="11.32" fill="#7fd0ff" opacity=".85"/><rect x="64.2" y="24" width="40.76" height="27.74" fill="#5fa3cf" opacity=".8"/><rect x="65.33" y="26.27" width="10.19" height="23.21" fill="#8cc8ea" opacity=".65"/><circle cx="82.31" cy="38.72" r="5.89" fill="url(#rg)"/><circle cx="97.03" cy="38.72" r="6.23" fill="url(#rg)"/><rect x="90.24" y="23.44" width="6.23" height="6.23" fill="#d6eefc" opacity=".8"/><rect x="56.84" y="55.14" width="9.06" height="7.02" fill="#8fd6ff"/><rect x="69.29" y="55.14" width="7.93" height="7.02" fill="#8fd6ff"/><rect x="79.48" y="55.14" width="9.06" height="7.02" fill="#8fd6ff"/><rect x="89.11" y="55.14" width="14.15" height="7.02" fill="#8fd6ff"/><rect x="16.64" y="54.01" width="7.93" height="5.66" fill="#7fc8f5"/><path d="M53.44 64.76H104.96V104.96H69.29Z" fill="#22405f"/><path d="M62.5 69.29H104.96V76.09H69.29Z" fill="#18283c"/><path d="M82.88 76.09L104.96 80.62V104.96H87.41Z" fill="#7fb6dd" opacity=".75"/><path d="M0 73.82L24 69.29L17.21 82.88L0 87.41Z" fill="#20334b"/><path d="M74.39 54.01L79.48 54.01L80.62 60.24L82.88 74.95L71.56 74.95L72.12 60.24Z" fill="#2a2624"/><path d="M10.42 56.84L14.38 56.84L15.51 69.29L9.28 69.29Z" fill="#3a2c28"/><path d="M27.4 53.44L37.59 62.5L48.91 64.76L51.18 87.41L39.86 87.41L26.27 69.29Z" fill="#4a5460"/><path d="M35.33 62.5L43.25 64.76L46.65 87.41L40.99 87.41Z" fill="#aeb8c2"/><circle cx="38.16" cy="63.63" r="2.49" fill="#6fc3f5"/><circle cx="40.99" cy="77.79" r="1.81" fill="#8fd6ff"/><path d="M0.79 84.01L24 69.29L43.25 88.54L48.91 104.96H0.79Z" fill="url(#rc)"/><path d="M51.18 86.28L57.97 79.48L67.03 81.75L79.48 104.96H53.44Z" fill="url(#rc)"/><path d="M16.08 79.48L27.4 77.22L39.86 86.28L27.4 77.22Z" fill="#7d858f"/><path d="M14.38 78.35L26.27 73.82L41.55 88.54L27.4 80.62Z" fill="#7a828c"/><path d="M43.25 88.54L48.91 104.96H53.44L51.18 86.28Z" fill="#2a303a"/><path d="M24 69.29L43.25 88.54L48.91 104.96" fill="none" stroke="#3aa4e8" stroke-width=".9"/><path d="M51.18 86.28L57.97 79.48L68.16 82.31" fill="none" stroke="#3aa4e8" stroke-width=".9"/><path d="M0 84.01C7.02 80.62 12.68 87.41 13.81 98.73L14.38 104.96H0Z" fill="#2a2f38"/><path d="M1.36 87.41C7.02 86.28 10.42 91.94 11.55 103.26" fill="none" stroke="#4fb4f0" stroke-width="1"/><path d="M3.62 85.14C9.28 85.14 12.68 91.94 13.59 102.13" fill="none" stroke="#c9d2da" stroke-width="1.2"/><path d="M68.16 82.31C76.09 84.01 79.48 91.94 79.48 104.96H73.82C74.39 96.47 72.69 89.67 68.16 82.31Z" fill="#2a2f38"/><path d="M71.56 85.14C77.22 88.54 78.58 96.47 78.35 104.39" fill="none" stroke="#4fb4f0" stroke-width="1"/><path d="M17.78 27.4C18.34 12.68 27.4 1.36 39.86 0.79C52.31 0.79 60.8 10.42 62.5 24C63.07 30.8 61.59 37.59 61.14 43.25C60.8 50.05 57.97 57.97 53.44 61.59C50.05 63.63 46.65 62.5 43.25 59.67C37.59 55.14 29.66 48.91 26.27 43.25C21.74 38.72 17.78 35.33 17.78 27.4Z" fill="url(#rh)"/><path d="M24 7.02C18.34 12.68 16.08 24 17.21 33.06C18.34 39.86 22.87 43.25 27.4 45.52C28.53 35.33 29.66 18.34 29.66 9.28Z" fill="#2b2f38"/><circle cx="24" cy="17.21" r="5.89" fill="#1f2530" stroke="#3f9be0" stroke-width="1.3"/><circle cx="23.55" cy="17.55" r="2.72" fill="#3a78c8"/><circle cx="20.38" cy="33.63" r="4.76" fill="#1f2530" stroke="#3f9be0" stroke-width="1.2"/><circle cx="19.7" cy="33.63" r="2.04" fill="#7a5a48"/><path d="M62.5 24C63.07 30.8 61.59 37.59 61.14 43.25C60.8 50.05 57.97 57.97 53.44 61.59C56.27 53.44 54.57 44.38 53.44 39.86C57.97 35.33 60.24 29.66 62.5 24Z" fill="#8d99a6" opacity=".75"/><path d="M48.91 35.33C51.18 38.72 53.44 43.25 55.14 45.52C53.44 46.65 48.91 46.65 47.21 45.52C48.35 42.12 48.91 38.72 48.91 35.33Z" fill="#7c8894" opacity=".8"/><path d="M45.52 51.74C48.91 50.61 53.44 51.18 56.84 52.31C53.44 54.57 48.91 54.57 45.52 51.74Z" fill="#8e98a3"/><ellipse cx="40.99" cy="33.63" rx="5.21" ry="3.17" fill="#3b79ea"/><ellipse cx="41.21" cy="33.63" rx="2.94" ry="1.7" fill="#bfe2ff"/><ellipse cx="57.4" cy="33.97" rx="3.62" ry="2.26" fill="#3b79ea"/><ellipse cx="57.4" cy="33.97" rx="1.7" ry="1.25" fill="#bfe2ff"/></svg></div><div class="img" style="left:918px;top:361px"><svg width="105" height="105" viewBox="0 0 105 105"><rect width="105" height="105" fill="#fdfdfd"/><path d="M65.33 41.89V26.27Q65.33 19.81 58.88 19.81H24Q17.55 19.81 17.55 26.27V67.03Q17.55 73.48 24 73.48H39.63" fill="none" stroke="#000" stroke-width="5.21"/><text x="24.91" y="38.72" font-family="Liberation Sans,sans-serif" font-weight="700" font-size="12.6" textLength="33.06" lengthAdjust="spacingAndGlyphs" fill="#000">BLOG</text><rect x="25.14" y="44.95" width="32.61" height="3.17" fill="#000"/><rect x="25.14" y="53.22" width="22.87" height="3.17" fill="#000"/><rect x="25.14" y="61.37" width="17.21" height="3.4" fill="#000"/><path d="M46.31 67.37L74.95 38.95L89.45 53.44L61.14 81.97L41.55 87.18Z" fill="#fdfdfd" stroke="#000" stroke-width="4.76" stroke-linejoin="round"/><path d="M50.95 68.39L54.12 69.52L55.48 74.05L59.33 75.41L60.24 79.71" fill="none" stroke="#000" stroke-width="2.49" stroke-linejoin="round" stroke-linecap="round"/><path d="M41.55 87.18L46.99 76.31L52.31 81.52Z" fill="#000" stroke="#000" stroke-width="1.59" stroke-linejoin="round"/></svg></div><div class="img" style="left:1458px;top:361px"><svg width="105" height="105" viewBox="0 0 105 105"><rect width="105" height="105" fill="#0d0d0d"/><clipPath id="xc"><rect x="0" y="12.12" width="105" height="35.1"/></clipPath><g clip-path="url(#xc)" stroke="#fff" stroke-width="10.2"><path d="M38.23 9.12L66.96 50.21M66.96 9.12L38.23 50.21" transform="translate(0 0)"/></g><text x="12.62" y="68.21" font-family="Liberation Sans,Noto Sans CJK JP,sans-serif" font-weight="700" font-size="15.44" textLength="78.8" lengthAdjust="spacingAndGlyphs" fill="#fff">コンテンツ</text><text x="10.42" y="86.8" font-family="Liberation Sans,Noto Sans CJK JP,sans-serif" font-weight="700" font-size="16.73" textLength="83.76" lengthAdjust="spacingAndGlyphs" fill="#fff">クリエイター</text></svg></div><div class="img" style="left:2000px;top:361px"><svg width="105" height="105" viewBox="0 0 105 105"><defs><linearGradient id="ag" x1="0" y1="0" x2="1" y2="1"><stop offset="0" stop-color="#5fe0f5"/><stop offset="1" stop-color="#7a5cf0"/></linearGradient><linearGradient id="ap" x1="0" y1="0" x2="1" y2="0"><stop offset="0" stop-color="#4a6cf5"/><stop offset=".5" stop-color="#b13ee0"/><stop offset="1" stop-color="#3f7df5"/></linearGradient><linearGradient id="ab" x1="0" y1="0" x2="0" y2="1"><stop offset="0" stop-color="#f2f6ff"/><stop offset="1" stop-color="#6fd0f2"/></linearGradient></defs><rect width="105" height="105" fill="#2a2230"/><path d="M12.68 64.76L12.68 69.29L51.74 93.64L92.5 68.16L92.5 63.63L51.74 89.11Z" fill="url(#ap)"/><path d="M12.68 64.2L51.74 89.11L92.5 63.41" fill="none" stroke="#f0f0f8" stroke-width="1"/><path d="M43.25 16.64L51.18 12.68L71.56 24" fill="none" stroke="#e8e8f0" stroke-width=".8"/><circle cx="37.95" cy="23.33" r="0.57" fill="#45d3ee" opacity=".9"/><circle cx="59.06" cy="82.62" r="0.68" fill="#45d3ee" opacity=".9"/><circle cx="18.56" cy="44.22" r="0.68" fill="#45d3ee" opacity=".9"/><circle cx="56.47" cy="16.17" r="1.13" fill="#45d3ee" opacity=".9"/><circle cx="59.08" cy="16.38" r="1.13" fill="#e8f4ff" opacity=".9"/><circle cx="56.93" cy="21.95" r="0.91" fill="#b04ad8" opacity=".9"/><circle cx="55.63" cy="56.15" r="1.13" fill="#d050d0" opacity=".9"/><circle cx="26.28" cy="56.99" r="0.68" fill="#6a8cf5" opacity=".9"/><circle cx="57.56" cy="59.91" r="0.91" fill="#d050d0" opacity=".9"/><circle cx="54.9" cy="72.27" r="0.91" fill="#38c0e0" opacity=".9"/><circle cx="36.03" cy="50.23" r="0.79" fill="#d050d0" opacity=".9"/><circle cx="48.14" cy="59.12" r="0.57" fill="#45d3ee" opacity=".9"/><circle cx="53.28" cy="24.44" r="0.79" fill="#b04ad8" opacity=".9"/><circle cx="87.63" cy="44.49" r="0.57" fill="#38c0e0" opacity=".9"/><circle cx="58.26" cy="79.95" r="0.79" fill="#6a8cf5" opacity=".9"/><circle cx="68.23" cy="57.98" r="1.13" fill="#e8f4ff" opacity=".9"/><circle cx="33.55" cy="66.01" r="0.57" fill="#45d3ee" opacity=".9"/><circle cx="71.15" cy="35.74" r="1.13" fill="#d050d0" opacity=".9"/><circle cx="78.55" cy="33.78" r="0.91" fill="#d050d0" opacity=".9"/><circle cx="40.53" cy="59.28" r="0.91" fill="#45d3ee" opacity=".9"/><circle cx="29.34" cy="34" r="0.68" fill="#e8f4ff" opacity=".9"/><circle cx="43.42" cy="79.63" r="0.57" fill="#b04ad8" opacity=".9"/><circle cx="48.17" cy="54.47" r="0.68" fill="#e8f4ff" opacity=".9"/><circle cx="45.4" cy="39.58" r="0.91" fill="#b04ad8" opacity=".9"/><circle cx="30.46" cy="29.78" r="0.91" fill="#38c0e0" opacity=".9"/><circle cx="26.41" cy="33.57" r="0.68" fill="#e8f4ff" opacity=".9"/><circle cx="55.13" cy="59.19" r="0.79" fill="#b04ad8" opacity=".9"/><circle cx="67.84" cy="51.82" r="1.13" fill="#d050d0" opacity=".9"/><circle cx="43.54" cy="42.72" r="0.57" fill="#e8f4ff" opacity=".9"/><circle cx="24.78" cy="38.12" r="0.57" fill="#45d3ee" opacity=".9"/><circle cx="19.82" cy="39.96" r="0.57" fill="#45d3ee" opacity=".9"/><circle cx="82.83" cy="59.52" r="0.68" fill="#d050d0" opacity=".9"/><circle cx="32.11" cy="38.69" r="0.79" fill="#e8f4ff" opacity=".9"/><circle cx="92.51" cy="47.95" r="0.91" fill="#6a8cf5" opacity=".9"/><circle cx="39.48" cy="32.23" r="0.68" fill="#38c0e0" opacity=".9"/><circle cx="54.61" cy="23" r="1.13" fill="#45d3ee" opacity=".9"/><circle cx="73.35" cy="34.84" r="0.57" fill="#d050d0" opacity=".9"/><circle cx="80.47" cy="52.05" r="0.68" fill="#6a8cf5" opacity=".9"/><circle cx="74.48" cy="53.16" r="1.13" fill="#6a8cf5" opacity=".9"/><circle cx="63.43" cy="59.46" r="0.68" fill="#b04ad8" opacity=".9"/><circle cx="78.26" cy="69.35" r="0.68" fill="#b04ad8" opacity=".9"/><circle cx="53.75" cy="39.33" r="0.57" fill="#45d3ee" opacity=".9"/><circle cx="75.96" cy="48.44" r="0.68" fill="#d050d0" opacity=".9"/><circle cx="60.88" cy="38.45" r="0.79" fill="#6a8cf5" opacity=".9"/><circle cx="49.87" cy="37.93" r="0.91" fill="#38c0e0" opacity=".9"/><circle cx="39.59" cy="61.79" r="0.57" fill="#e8f4ff" opacity=".9"/><circle cx="75.32" cy="70.15" r="0.91" fill="#b04ad8" opacity=".9"/><circle cx="46.92" cy="61.22" r="0.57" fill="#d050d0" opacity=".9"/><circle cx="43.82" cy="42.91" r="0.57" fill="#d050d0" opacity=".9"/><circle cx="13.79" cy="57.71" r="0.91" fill="#d050d0" opacity=".9"/><circle cx="40.11" cy="54.41" r="0.68" fill="#45d3ee" opacity=".9"/><circle cx="64.51" cy="52.69" r="0.68" fill="#e8f4ff" opacity=".9"/><circle cx="28.9" cy="50.7" r="1.13" fill="#6a8cf5" opacity=".9"/><circle cx="32.69" cy="44.28" r="0.68" fill="#45d3ee" opacity=".9"/><circle cx="48.9" cy="57.12" r="1.13" fill="#e8f4ff" opacity=".9"/><circle cx="53.17" cy="79.74" r="0.68" fill="#38c0e0" opacity=".9"/><circle cx="25.6" cy="48.54" r="0.57" fill="#38c0e0" opacity=".9"/><circle cx="22.31" cy="22.87" r="4.3" fill="#2a2f55" stroke="#e6ecff" stroke-width=".9"/><circle cx="22.31" cy="22.87" r="2.5" fill="url(#ag)"/><circle cx="42.12" cy="21.17" r="4.76" fill="#2a2f55" stroke="#e6ecff" stroke-width=".9"/><circle cx="42.12" cy="21.17" r="2.76" fill="url(#ag)"/><circle cx="52.31" cy="17.78" r="3.85" fill="#2a2f55" stroke="#e6ecff" stroke-width=".9"/><circle cx="52.31" cy="17.78" r="2.23" fill="url(#ag)"/><circle cx="63.63" cy="25.7" r="3.4" fill="#2a2f55" stroke="#e6ecff" stroke-width=".9"/><circle cx="63.63" cy="25.7" r="1.97" fill="url(#ag)"/><circle cx="81.75" cy="20.38" r="4.53" fill="#2a2f55" stroke="#e6ecff" stroke-width=".9"/><circle cx="81.75" cy="20.38" r="2.63" fill="url(#ag)"/><circle cx="18.34" cy="38.72" r="4.53" fill="#2a2f55" stroke="#e6ecff" stroke-width=".9"/><circle cx="18.34" cy="38.72" r="2.63" fill="url(#ag)"/><circle cx="32.5" cy="34.19" r="3.4" fill="#2a2f55" stroke="#e6ecff" stroke-width=".9"/><circle cx="32.5" cy="34.19" r="1.97" fill="url(#ag)"/><circle cx="71.56" cy="35.33" r="6.57" fill="#2a2f55" stroke="#e6ecff" stroke-width=".9"/><circle cx="71.56" cy="35.33" r="3.81" fill="url(#ag)"/><circle cx="85.14" cy="33.63" r="2.94" fill="#2a2f55" stroke="#e6ecff" stroke-width=".9"/><circle cx="85.14" cy="33.63" r="1.71" fill="url(#ag)"/><circle cx="71.56" cy="50.61" r="5.1" fill="#2a2f55" stroke="#e6ecff" stroke-width=".9"/><circle cx="71.56" cy="50.61" r="2.96" fill="url(#ag)"/><circle cx="84.58" cy="59.1" r="5.89" fill="#2a2f55" stroke="#e6ecff" stroke-width=".9"/><circle cx="84.58" cy="59.1" r="3.41" fill="url(#ag)"/><circle cx="44.95" cy="65.33" r="3.4" fill="#2a2f55" stroke="#e6ecff" stroke-width=".9"/><circle cx="44.95" cy="65.33" r="1.97" fill="url(#ag)"/><circle cx="32.5" cy="65.9" r="3.62" fill="#2a2f55" stroke="#e6ecff" stroke-width=".9"/><circle cx="32.5" cy="65.9" r="2.1" fill="url(#ag)"/><circle cx="55.14" cy="72.69" r="5.43" fill="#2a2f55" stroke="#e6ecff" stroke-width=".9"/><circle cx="55.14" cy="72.69" r="3.15" fill="url(#ag)"/><circle cx="41.55" cy="75.52" r="3.17" fill="#2a2f55" stroke="#e6ecff" stroke-width=".9"/><circle cx="41.55" cy="75.52" r="1.84" fill="url(#ag)"/><circle cx="51.74" cy="83.45" r="3.4" fill="#2a2f55" stroke="#e6ecff" stroke-width=".9"/><circle cx="51.74" cy="83.45" r="1.97" fill="url(#ag)"/><circle cx="82.31" cy="86.84" r="2.49" fill="#2a2f55" stroke="#e6ecff" stroke-width=".9"/><circle cx="82.31" cy="86.84" r="1.44" fill="url(#ag)"/><circle cx="64.2" cy="48.91" r="2.26" fill="#2a2f55" stroke="#e6ecff" stroke-width=".9"/><circle cx="64.2" cy="48.91" r="1.31" fill="url(#ag)"/><circle cx="39.86" cy="48.91" r="2.04" fill="#2a2f55" stroke="#e6ecff" stroke-width=".9"/><circle cx="39.86" cy="48.91" r="1.18" fill="url(#ag)"/><circle cx="55.12" cy="50.04" r="0.4" fill="#38c0e0"/><circle cx="48.67" cy="13.24" r="0.4" fill="#e8f4ff"/><circle cx="61.31" cy="27.13" r="0.57" fill="#e8f4ff"/><circle cx="53.26" cy="76.34" r="0.79" fill="#b04ad8"/><circle cx="57.48" cy="87.35" r="0.68" fill="#b04ad8"/><circle cx="45.75" cy="42.75" r="0.57" fill="#45d3ee"/><circle cx="66.64" cy="45.66" r="0.51" fill="#d050d0"/><circle cx="64.37" cy="40.63" r="0.57" fill="#b04ad8"/><circle cx="51.55" cy="91.12" r="0.51" fill="#b04ad8"/><circle cx="44.7" cy="45.09" r="0.57" fill="#6a8cf5"/><circle cx="19.12" cy="40.61" r="0.57" fill="#38c0e0"/><circle cx="49.2" cy="67.91" r="0.68" fill="#6a8cf5"/><circle cx="54.02" cy="34.9" r="0.4" fill="#45d3ee"/><circle cx="75.5" cy="32.88" r="0.51" fill="#e8f4ff"/><circle cx="81.29" cy="65.71" r="0.57" fill="#e8f4ff"/><circle cx="58.39" cy="67.69" r="0.4" fill="#6a8cf5"/><circle cx="46.46" cy="16.85" r="0.4" fill="#d050d0"/><circle cx="61.47" cy="28.99" r="0.57" fill="#45d3ee"/><circle cx="48.8" cy="38.44" r="0.79" fill="#e8f4ff"/><circle cx="22.16" cy="53.64" r="0.51" fill="#45d3ee"/><circle cx="63.16" cy="53.98" r="0.51" fill="#6a8cf5"/><circle cx="48.13" cy="65.4" r="0.57" fill="#6a8cf5"/><circle cx="53.06" cy="90.16" r="0.79" fill="#e8f4ff"/><circle cx="31.72" cy="47.17" r="0.68" fill="#d050d0"/><circle cx="52.18" cy="78.55" r="0.68" fill="#38c0e0"/><circle cx="36.81" cy="28.4" r="0.51" fill="#6a8cf5"/><circle cx="62.89" cy="82.21" r="0.68" fill="#b04ad8"/><circle cx="42.81" cy="51.94" r="0.57" fill="#38c0e0"/><circle cx="31.43" cy="34.71" r="0.68" fill="#b04ad8"/><circle cx="24.48" cy="47.07" r="0.57" fill="#6a8cf5"/><circle cx="56.46" cy="30.77" r="0.57" fill="#b04ad8"/><circle cx="42.88" cy="49.41" r="0.79" fill="#d050d0"/><circle cx="28.05" cy="51.84" r="0.4" fill="#45d3ee"/><circle cx="30.66" cy="58.39" r="0.79" fill="#b04ad8"/><circle cx="65.53" cy="68.95" r="0.79" fill="#e8f4ff"/><circle cx="74.29" cy="69.33" r="0.68" fill="#b04ad8"/><circle cx="34.88" cy="61.07" r="0.51" fill="#45d3ee"/><circle cx="79.26" cy="68.87" r="0.79" fill="#d050d0"/><circle cx="46.78" cy="67.74" r="0.79" fill="#b04ad8"/><circle cx="58.21" cy="76.79" r="0.4" fill="#d050d0"/><circle cx="59.49" cy="83.26" r="0.51" fill="#45d3ee"/><circle cx="41.16" cy="19.48" r="0.68" fill="#38c0e0"/><circle cx="55.17" cy="30.78" r="0.57" fill="#45d3ee"/><circle cx="49.06" cy="16.66" r="0.79" fill="#38c0e0"/><circle cx="19.1" cy="53.56" r="0.68" fill="#6a8cf5"/><circle cx="30.82" cy="72.22" r="0.51" fill="#d050d0"/><circle cx="64.9" cy="48.25" r="0.68" fill="#45d3ee"/><circle cx="50.87" cy="66.33" r="0.4" fill="#38c0e0"/><circle cx="63.49" cy="27.04" r="0.79" fill="#b04ad8"/><circle cx="38.78" cy="63.73" r="0.57" fill="#38c0e0"/><circle cx="66.71" cy="67.02" r="0.68" fill="#6a8cf5"/><circle cx="69.74" cy="34.1" r="0.68" fill="#e8f4ff"/><circle cx="56.62" cy="36.21" r="0.4" fill="#e8f4ff"/><circle cx="12.99" cy="48.14" r="0.79" fill="#e8f4ff"/><circle cx="72.91" cy="32.18" r="0.57" fill="#b04ad8"/><circle cx="61.08" cy="62.12" r="0.57" fill="#45d3ee"/><circle cx="69.28" cy="29.71" r="0.68" fill="#e8f4ff"/><circle cx="51.91" cy="47.47" r="0.57" fill="#d050d0"/><circle cx="23.1" cy="38.83" r="0.57" fill="#45d3ee"/><circle cx="35.34" cy="41.12" r="0.68" fill="#e8f4ff"/><circle cx="41.16" cy="45.64" r="0.57" fill="#45d3ee"/><circle cx="65.89" cy="62.39" r="0.51" fill="#b04ad8"/><circle cx="91.26" cy="46.3" r="0.57" fill="#b04ad8"/><circle cx="46.66" cy="13.33" r="0.68" fill="#38c0e0"/><circle cx="56.63" cy="69.24" r="0.4" fill="#d050d0"/><circle cx="45.28" cy="60.76" r="0.51" fill="#d050d0"/><circle cx="82.92" cy="50.29" r="0.79" fill="#b04ad8"/><circle cx="25.57" cy="44.57" r="0.57" fill="#6a8cf5"/><circle cx="32.54" cy="70.79" r="0.57" fill="#e8f4ff"/><circle cx="65.4" cy="35.34" r="0.79" fill="#d050d0"/><circle cx="43.92" cy="24.53" r="0.51" fill="#45d3ee"/><circle cx="52.35" cy="28.8" r="0.57" fill="#e8f4ff"/><circle cx="46.64" cy="55.33" r="0.51" fill="#45d3ee"/><circle cx="25.89" cy="55.98" r="0.57" fill="#b04ad8"/><circle cx="41.78" cy="76.5" r="0.51" fill="#45d3ee"/><circle cx="73.09" cy="44.4" r="0.68" fill="#d050d0"/><circle cx="54.58" cy="41.49" r="0.57" fill="#45d3ee"/><circle cx="52.44" cy="57.47" r="0.57" fill="#b04ad8"/><circle cx="67.92" cy="53.83" r="0.51" fill="#45d3ee"/><circle cx="33.8" cy="31.1" r="0.68" fill="#d050d0"/><circle cx="48.15" cy="88.21" r="0.4" fill="#b04ad8"/><circle cx="85.07" cy="49.3" r="0.79" fill="#e8f4ff"/><circle cx="24.22" cy="53.27" r="0.4" fill="#d050d0"/><circle cx="69.09" cy="79.51" r="0.68" fill="#45d3ee"/><circle cx="56.82" cy="14.18" r="0.51" fill="#b04ad8"/><circle cx="58.29" cy="14.03" r="0.57" fill="#b04ad8"/><circle cx="62.97" cy="53.75" r="0.68" fill="#d050d0"/><circle cx="27.29" cy="32.1" r="0.79" fill="#45d3ee"/><circle cx="49.37" cy="88.61" r="0.51" fill="#e8f4ff"/><circle cx="54.75" cy="55.27" r="0.4" fill="#e8f4ff"/><circle cx="69.39" cy="35.87" r="0.4" fill="#b04ad8"/><circle cx="52.45" cy="65.58" r="0.68" fill="#45d3ee"/><circle cx="32.67" cy="65.01" r="0.57" fill="#b04ad8"/><circle cx="52.01" cy="67.31" r="0.68" fill="#6a8cf5"/><circle cx="67.58" cy="27.02" r="0.57" fill="#d050d0"/><circle cx="52.24" cy="27.21" r="0.51" fill="#b04ad8"/><circle cx="49.73" cy="32.44" r="0.57" fill="#45d3ee"/><circle cx="89.69" cy="51.12" r="0.51" fill="#b04ad8"/><circle cx="51.37" cy="84.68" r="0.4" fill="#38c0e0"/><circle cx="23.57" cy="42.84" r="0.51" fill="#45d3ee"/><circle cx="43.84" cy="83.69" r="0.57" fill="#d050d0"/><circle cx="65.11" cy="53.47" r="0.68" fill="#45d3ee"/><circle cx="37.15" cy="69.71" r="0.57" fill="#6a8cf5"/><circle cx="47.87" cy="19.8" r="0.4" fill="#6a8cf5"/><circle cx="18.18" cy="45" r="0.4" fill="#38c0e0"/><ellipse cx="81.75" cy="20.38" rx="9.62" ry="3.62" fill="none" stroke="#48d6e8" stroke-width=".8"/><ellipse cx="81.75" cy="20.38" rx="3.62" ry="9.28" fill="none" stroke="#c050e0" stroke-width=".8" transform="rotate(-15 81.75 20.38)"/><ellipse cx="32.5" cy="34.19" rx="7.02" ry="2.72" fill="none" stroke="#3fc8d8" stroke-width=".7" transform="rotate(30 32.5 34.19)"/><ellipse cx="32.5" cy="34.19" rx="7.02" ry="2.72" fill="none" stroke="#3fc8d8" stroke-width=".7" transform="rotate(-30 32.5 34.19)"/><path d="M84.58 34.76L79.48 44.38H91.94L86.84 34.76Z" fill="none" stroke="#e8e8f5" stroke-width=".9"/><path d="M81.18 42.69L80.05 45.29H91.37L90.24 42.69Z" fill="url(#ap)"/><path d="M12.68 57.97L18.91 54.57L25.7 57.97L25.7 64.2L18.91 67.6L12.68 64.2Z" fill="#52d6f0"/><path d="M18.91 61.37L25.7 57.97L25.7 64.2L18.91 67.6Z" fill="#b44ae0"/><path d="M12.68 57.97L18.91 54.57L25.7 57.97L18.91 61.37Z" fill="#eef4ff"/><path d="M26.27 48.35L31.02 45.52L35.89 48.35L35.89 54.01L31.02 56.84L26.27 54.01Z" fill="#6a7ff0" stroke="#dfe8ff" stroke-width=".6"/><rect x="66.46" y="68.16" width="2.04" height="10.19" fill="#48c8e0"/><rect x="70.43" y="64.76" width="2.04" height="13.59" fill="#d050c0"/><rect x="74.39" y="61.37" width="2.04" height="16.98" fill="#e8d060"/><rect x="77.79" y="57.4" width="2.04" height="20.95" fill="#e8ecf5"/><path d="M39.86 60.24C40.99 56.27 45.52 55.14 51.74 55.14C57.97 55.14 63.63 56.27 65.33 60.24L68.16 71.56L53.44 79.48L37.59 71.56Z" fill="url(#ab)"/><rect x="48.91" y="50.61" width="6.79" height="5.1" fill="#2fb8c8"/><circle cx="52.31" cy="40.42" r="9.96" fill="url(#ab)"/><rect x="41.21" y="37.59" width="2.26" height="6.79" rx="1" fill="#8fdcf5"/><rect x="61.37" y="37.59" width="2.26" height="6.79" rx="1" fill="#8fdcf5"/><rect x="44.61" y="36.68" width="15.62" height="8.15" rx="3.85" fill="#1d2138"/><circle cx="48.69" cy="40.99" r="1.92" fill="#4fd8f0"/><circle cx="56.05" cy="40.99" r="1.92" fill="#4fd8f0"/><path d="M52.08 30.23V24" stroke="#e8ecf5" stroke-width=".8"/><circle cx="52.08" cy="23.78" r="1.02" fill="#d050d0"/><path d="M48.91 69.29L55.14 65.9L61.93 69.29L61.93 76.09L55.14 80.05L48.91 76.09Z" fill="#eef2ff"/><circle cx="55.48" cy="72.69" r="3.4" fill="url(#ag)"/><text x="28.53" y="17.78" font-family="Liberation Sans,sans-serif" font-weight="700" font-size="5" fill="#8fdcf5">AI</text><text x="60.01" y="16.64" font-family="Liberation Sans,sans-serif" font-weight="700" font-size="5" fill="#8fdcf5">AI</text><path d="M17.78 78.35V89.67" stroke="#46bfe0" stroke-width=".7"/><path d="M20.04 80.62V88.54" stroke="#46bfe0" stroke-width=".7"/><path d="M25.7 79.48V91.94" stroke="#46bfe0" stroke-width=".7"/><path d="M85.14 46.65V53.44" stroke="#46bfe0" stroke-width=".7"/></svg></div><div class="img" style="left:377px;top:657px"><svg width="105" height="105" viewBox="0 0 105 105"><rect width="105" height="105" fill="#771b7a"/><path d="M12.12 10.19C16.08 12.12 22.87 12.12 26.83 10.76C27.4 21.74 24 30.8 19.7 37.02C27.4 29.66 31.36 19.47 33.63 10.42C36.46 9.62 39.86 9.62 42.12 9.85C39.86 24 31.93 38.72 19.7 50.84C35.33 39.86 44.38 26.27 48.35 10.42C52.88 9.85 57.97 10.42 61.93 12.12C55.71 35.33 40.99 54.57 24.57 67.93C46.65 53.44 62.5 35.33 69.86 13.25C80.62 14.38 90.81 25.14 91.37 42.12C91.6 53.44 89.67 62.5 88.54 69.29C89.11 79.48 95.34 89.67 100.43 97.03C91.94 92.5 80.62 90.24 71.56 90.24C57.97 90.24 48.91 93.64 37.59 93.64C24 93.64 12.68 84.01 9.85 71.56C7.59 62.5 10.98 46.65 13.25 33.06C14.95 22.87 14.38 14.95 12.12 10.19Z" fill="#fff"/><path d="M89.11 67.6C84.01 76.09 76.09 80.62 70.43 80.28C63.63 79.48 61.59 69.29 61.93 59.1C62.5 46.65 69.29 33.06 77.79 29.89C82.31 29.66 84.01 37.59 83.79 44.38C83.45 53.44 80.62 62.5 74.39 64.2C70.99 64.2 70.99 57.97 71.78 53.44C72.46 48.91 73.6 45.52 74.73 43.82C74.39 48.91 73.26 54.57 74.39 58.54C76.09 57.97 79.48 48.91 80.05 40.99C80.28 36.46 78.92 35.33 77.22 35.89C71.56 39.86 67.6 53.44 67.93 62.5C68.16 69.29 70.43 70.99 74.39 70.99C80.62 70.65 86.28 68.16 89.11 67.6Z" fill="#771b7a"/></svg></div><div class="img" style="left:918px;top:657px"><svg width="105" height="105" viewBox="0 0 105 105"><rect width="105" height="105" fill="#9ccbb2"/><path d="M14.38 0V104.96M88.32 0V104.96M0 14.38H104.96M0 88.32H104.96" stroke="#2f4b45" stroke-width=".8"/><path d="M25.14 0V14.38M25.14 88.32V104.96" stroke="#2f4b45" stroke-width=".7"/><path d="M35.89 0V14.38M35.89 88.32V104.96" stroke="#2f4b45" stroke-width=".7"/><path d="M46.65 0V14.38M46.65 88.32V104.96" stroke="#2f4b45" stroke-width=".7"/><path d="M57.07 0V14.38M57.07 88.32V104.96" stroke="#2f4b45" stroke-width=".7"/><path d="M67.6 0V14.38M67.6 88.32V104.96" stroke="#2f4b45" stroke-width=".7"/><path d="M78.35 0V14.38M78.35 88.32V104.96" stroke="#2f4b45" stroke-width=".7"/><path d="M0 25.7H14.38M88.32 25.7H104.96" stroke="#2f4b45" stroke-width=".7"/><path d="M0 36.46H14.38M88.32 36.46H104.96" stroke="#2f4b45" stroke-width=".7"/><path d="M0 46.65H14.38M88.32 46.65H104.96" stroke="#2f4b45" stroke-width=".7"/><path d="M0 56.84H14.38M88.32 56.84H104.96" stroke="#2f4b45" stroke-width=".7"/><path d="M0 67.03H14.38M88.32 67.03H104.96" stroke="#2f4b45" stroke-width=".7"/><path d="M0 77.79H14.38M88.32 77.79H104.96" stroke="#2f4b45" stroke-width=".7"/><rect x="14.38" y="10.64" width="10.76" height="3.74" fill="#2e7fa6"/><rect x="25.14" y="10.64" width="10.76" height="3.74" fill="#58b5a8"/><rect x="67.6" y="10.64" width="10.76" height="3.74" fill="#e6552f"/><rect x="78.35" y="10.64" width="9.96" height="3.74" fill="#e89a2a"/><rect x="14.38" y="88.32" width="10.76" height="3.17" fill="#3c7fc0"/><rect x="35.89" y="88.32" width="10.76" height="3.17" fill="#2c8f95"/><rect x="67.6" y="88.32" width="10.76" height="3.17" fill="#d8478f"/><rect x="10.98" y="15.51" width="3.4" height="10.19" fill="#d33a2f"/><rect x="10.98" y="26.27" width="3.4" height="10.19" fill="#d8478f"/><rect x="10.98" y="46.65" width="3.4" height="10.19" fill="#5d78c8"/><rect x="10.98" y="56.84" width="3.4" height="10.19" fill="#2e8f8a"/><rect x="88.32" y="15.51" width="3.4" height="10.19" fill="#2f9f58"/><rect x="88.32" y="26.27" width="3.4" height="10.19" fill="#2f9f58"/><rect x="88.32" y="55.14" width="3.4" height="11.89" fill="#e8c22c"/><rect x="88.32" y="75.52" width="3.4" height="11.89" fill="#e8792a"/><rect x="5.55" y="3.4" width="2.94" height="4.98" rx=".8" fill="#23403f" opacity="0.85"/><rect x="18.23" y="3.96" width="2.94" height="3.85" rx=".8" fill="#23403f" opacity="0.85"/><rect x="28.53" y="3.4" width="3.85" height="4.98" rx=".8" fill="#23403f" opacity="0.85"/><rect x="39.74" y="3.4" width="2.94" height="4.98" rx=".8" fill="#23403f" opacity="0.55"/><rect x="49.82" y="3.96" width="3.85" height="3.85" rx=".8" fill="#23403f" opacity="0.85"/><rect x="60.8" y="4.42" width="2.94" height="2.94" rx=".8" fill="#23403f" opacity="0.85"/><rect x="70.99" y="3.4" width="3.85" height="4.98" rx=".8" fill="#23403f" opacity="0.85"/><rect x="81.52" y="3.96" width="3.85" height="3.85" rx=".8" fill="#23403f" opacity="0.85"/><rect x="95" y="4.42" width="2.94" height="2.94" rx=".8" fill="#23403f" opacity="0.85"/><rect x="5.55" y="94.54" width="2.94" height="4.98" rx=".8" fill="#23403f" opacity="0.7"/><rect x="17.44" y="95.56" width="4.53" height="2.94" rx=".8" fill="#23403f" opacity="0.85"/><rect x="28.99" y="95.56" width="2.94" height="2.94" rx=".8" fill="#23403f" opacity="0.85"/><rect x="39.74" y="95.11" width="2.94" height="3.85" rx=".8" fill="#23403f" opacity="0.55"/><rect x="49.82" y="95.11" width="3.85" height="3.85" rx=".8" fill="#23403f" opacity="0.85"/><rect x="60.01" y="95.11" width="4.53" height="3.85" rx=".8" fill="#23403f" opacity="0.85"/><rect x="70.99" y="95.11" width="3.85" height="3.85" rx=".8" fill="#23403f" opacity="0.85"/><rect x="81.18" y="95.11" width="4.53" height="3.85" rx=".8" fill="#23403f" opacity="0.55"/><rect x="94.54" y="95.56" width="3.85" height="2.94" rx=".8" fill="#23403f" opacity="0.55"/><rect x="3.85" y="17.78" width="2.94" height="3.85" rx=".8" fill="#23403f" opacity="0.55"/><rect x="3.4" y="28.31" width="3.85" height="4.98" rx=".8" fill="#23403f" opacity="0.7"/><rect x="3.06" y="39.63" width="4.53" height="3.85" rx=".8" fill="#23403f" opacity="0.7"/><rect x="3.06" y="49.82" width="4.53" height="3.85" rx=".8" fill="#23403f" opacity="0.85"/><rect x="3.4" y="59.44" width="3.85" height="4.98" rx=".8" fill="#23403f" opacity="0.85"/><rect x="3.4" y="69.86" width="3.85" height="4.98" rx=".8" fill="#23403f" opacity="0.55"/><rect x="3.4" y="80.39" width="3.85" height="4.98" rx=".8" fill="#23403f" opacity="0.55"/><rect x="95.11" y="17.21" width="3.85" height="4.98" rx=".8" fill="#23403f" opacity="0.85"/><rect x="94.77" y="29.33" width="4.53" height="2.94" rx=".8" fill="#23403f" opacity="0.85"/><rect x="95.11" y="39.06" width="3.85" height="4.98" rx=".8" fill="#23403f" opacity="0.85"/><rect x="94.77" y="50.27" width="4.53" height="2.94" rx=".8" fill="#23403f" opacity="0.85"/><rect x="94.77" y="60.46" width="4.53" height="2.94" rx=".8" fill="#23403f" opacity="0.85"/><rect x="94.77" y="70.43" width="4.53" height="3.85" rx=".8" fill="#23403f" opacity="0.7"/><rect x="95.56" y="81.41" width="2.94" height="2.94" rx=".8" fill="#23403f" opacity="0.7"/><rect x="14.38" y="14.38" width="73.94" height="73.94" fill="#2c8b8a"/><rect x="14.38" y="14.72" width="73.37" height="18.34" fill="#b2352c" stroke="#6a2a22" stroke-width=".7"/><text x="16.98" y="24.91" font-family="Liberation Sans,sans-serif" font-weight="700" font-size="10.4" textLength="68.5" lengthAdjust="spacingAndGlyphs" fill="#fbf3e2">TRUMPOPOLY</text><rect x="19.7" y="27.85" width="63.41" height="2.49" fill="#d89a3a" opacity=".9"/><circle cx="76.65" cy="45.18" r="6.79" fill="#f2a41f" stroke="#c97a12" stroke-width=".9"/><text x="76.65" y="48.91" text-anchor="middle" font-family="Liberation Sans,sans-serif" font-weight="700" font-size="9" fill="#c66f10">B</text><path d="M9.28 87.41C9.85 76.09 12.68 64.76 18.34 59.33L27.4 62.5C33.06 59.1 37.59 57.97 41.55 57.97L48.91 68.16L57.97 62.5C64.76 63.63 71.56 65.9 74.39 69.29C79.48 73.82 82.88 80.62 84.01 87.41Z" fill="#1d2a3b"/><path d="M18.91 48.91C18.34 44.38 22.87 43.25 26.27 44.38C29.66 45.52 30.23 48.91 28.53 51.74L27.97 59.1L20.61 60.24Z" fill="#e9a066"/><path d="M18.34 59.67L27.97 58.54L29.1 63.63L19.7 65.67Z" fill="#f2ece0"/><path d="M74.39 63.63C76.09 61.37 79.48 62.5 80.62 65.9L84.01 59.67C85.71 59.1 86.84 60.8 86.28 63.07L84.01 73.82C81.75 77.22 78.35 77.79 76.65 76.09C74.39 71.56 73.82 68.16 74.39 63.63Z" fill="#e9a066"/><path d="M73.26 77.22L81.75 77.79L82.31 82.31L74.39 80.62Z" fill="#f2ece0"/><path d="M41.55 57.97L50.05 63.63L57.97 62.5L56.27 87.41H48.91Z" fill="#f4efe6"/><path d="M50.05 66.12L54.8 66.12L58.54 87.41H52.08Z" fill="#d9342b"/><path d="M41.55 43.25C41.55 37.59 46.65 35.33 52.31 35.89C59.1 36.46 62.5 40.99 61.93 48.91C61.59 55.71 57.97 62.5 52.88 63.41C47.78 63.63 43.25 57.97 42.12 51.18Z" fill="#eda565"/><path d="M53.44 57.97C56.27 56.84 59.1 53.44 60.24 48.91C60.8 54.57 57.97 61.37 52.88 63.41Z" fill="#d98a4c"/><path d="M45.52 45.52L50.05 44.84M55.14 45.06L59.33 45.74" stroke="#8a5a2a" stroke-width="1"/><path d="M46.42 48.01H49.82M55.71 48.23H58.88" stroke="#3a2a20" stroke-width=".9"/><path d="M52.08 48.35L51.18 53.44H53.44" fill="none" stroke="#b9743a" stroke-width=".8"/><path d="M48.91 57.74C51.18 56.84 54.01 56.84 56.27 57.52" fill="none" stroke="#8a3a2a" stroke-width="1"/><path d="M38.16 43.25C37.59 36.46 43.25 32.5 51.18 32.16C57.97 31.93 63.07 34.76 63.63 39.86C60.24 37.59 53.44 38.16 48.91 39.86C45.52 40.99 43.25 44.38 42.69 48.91C39.86 48.91 38.5 46.65 38.16 43.25Z" fill="#f3c244"/><path d="M39.86 38.72C44.38 34.76 53.44 33.63 62.5 37.59" fill="none" stroke="#d79a26" stroke-width=".8"/></svg></div><div class="img" style="left:1458px;top:657px"><svg width="105" height="105" viewBox="0 0 105 105"><rect width="105" height="105" fill="#771b7a"/><path d="M12.12 10.19C16.08 12.12 22.87 12.12 26.83 10.76C27.4 21.74 24 30.8 19.7 37.02C27.4 29.66 31.36 19.47 33.63 10.42C36.46 9.62 39.86 9.62 42.12 9.85C39.86 24 31.93 38.72 19.7 50.84C35.33 39.86 44.38 26.27 48.35 10.42C52.88 9.85 57.97 10.42 61.93 12.12C55.71 35.33 40.99 54.57 24.57 67.93C46.65 53.44 62.5 35.33 69.86 13.25C80.62 14.38 90.81 25.14 91.37 42.12C91.6 53.44 89.67 62.5 88.54 69.29C89.11 79.48 95.34 89.67 100.43 97.03C91.94 92.5 80.62 90.24 71.56 90.24C57.97 90.24 48.91 93.64 37.59 93.64C24 93.64 12.68 84.01 9.85 71.56C7.59 62.5 10.98 46.65 13.25 33.06C14.95 22.87 14.38 14.95 12.12 10.19Z" fill="#fff"/><path d="M89.11 67.6C84.01 76.09 76.09 80.62 70.43 80.28C63.63 79.48 61.59 69.29 61.93 59.1C62.5 46.65 69.29 33.06 77.79 29.89C82.31 29.66 84.01 37.59 83.79 44.38C83.45 53.44 80.62 62.5 74.39 64.2C70.99 64.2 70.99 57.97 71.78 53.44C72.46 48.91 73.6 45.52 74.73 43.82C74.39 48.91 73.26 54.57 74.39 58.54C76.09 57.97 79.48 48.91 80.05 40.99C80.28 36.46 78.92 35.33 77.22 35.89C71.56 39.86 67.6 53.44 67.93 62.5C68.16 69.29 70.43 70.99 74.39 70.99C80.62 70.65 86.28 68.16 89.11 67.6Z" fill="#771b7a"/></svg></div><div class="img" style="left:2000px;top:657px"><svg width="105" height="105" viewBox="0 0 105 105"><rect width="105" height="105" fill="#771b7a"/><path d="M12.12 10.19C16.08 12.12 22.87 12.12 26.83 10.76C27.4 21.74 24 30.8 19.7 37.02C27.4 29.66 31.36 19.47 33.63 10.42C36.46 9.62 39.86 9.62 42.12 9.85C39.86 24 31.93 38.72 19.7 50.84C35.33 39.86 44.38 26.27 48.35 10.42C52.88 9.85 57.97 10.42 61.93 12.12C55.71 35.33 40.99 54.57 24.57 67.93C46.65 53.44 62.5 35.33 69.86 13.25C80.62 14.38 90.81 25.14 91.37 42.12C91.6 53.44 89.67 62.5 88.54 69.29C89.11 79.48 95.34 89.67 100.43 97.03C91.94 92.5 80.62 90.24 71.56 90.24C57.97 90.24 48.91 93.64 37.59 93.64C24 93.64 12.68 84.01 9.85 71.56C7.59 62.5 10.98 46.65 13.25 33.06C14.95 22.87 14.38 14.95 12.12 10.19Z" fill="#fff"/><path d="M89.11 67.6C84.01 76.09 76.09 80.62 70.43 80.28C63.63 79.48 61.59 69.29 61.93 59.1C62.5 46.65 69.29 33.06 77.79 29.89C82.31 29.66 84.01 37.59 83.79 44.38C83.45 53.44 80.62 62.5 74.39 64.2C70.99 64.2 70.99 57.97 71.78 53.44C72.46 48.91 73.6 45.52 74.73 43.82C74.39 48.91 73.26 54.57 74.39 58.54C76.09 57.97 79.48 48.91 80.05 40.99C80.28 36.46 78.92 35.33 77.22 35.89C71.56 39.86 67.6 53.44 67.93 62.5C68.16 69.29 70.43 70.99 74.39 70.99C80.62 70.65 86.28 68.16 89.11 67.6Z" fill="#771b7a"/></svg></div><div class="a" style="left:2466px;top:24px;width:42px;height:42px;border-radius:50%;overflow:hidden"><svg width="42" height="42" viewBox="0 0 42 42"><defs><linearGradient id="av" x1="0" y1="0" x2="1" y2="0"><stop offset="0" stop-color="#4f9d94"/><stop offset=".4" stop-color="#62b98c"/><stop offset=".75" stop-color="#7b97b4"/><stop offset="1" stop-color="#8574c2"/></linearGradient><linearGradient id="avb" x1="0" y1="0" x2="0" y2="1"><stop offset="0" stop-color="#7e93bb"/><stop offset="1" stop-color="#46598f"/></linearGradient><linearGradient id="avh" x1="0" y1="0" x2="1" y2="0"><stop offset="0" stop-color="#5d76a8"/><stop offset=".6" stop-color="#a9bad4"/><stop offset="1" stop-color="#7388b2"/></linearGradient></defs><rect width="42" height="42" fill="url(#av)"/><path d="M0 0H42V8L30 6L14 10L0 7Z" fill="#3f8a96" opacity=".6"/><path d="M28 8H42V30H31Z" fill="#8d93c4" opacity=".55"/><path d="M3 42C4 33 10 29.5 16.5 27.5L19.3 20.5H25.6L27.2 26.8C33 28.8 38.2 32.5 39.5 42Z" fill="url(#avb)"/><path d="M19 20L20.5 26L23 29L25 25.5L25.8 20Z" fill="#3d4f86"/><ellipse cx="22.4" cy="12.6" rx="5.5" ry="8" fill="url(#avh)"/><path d="M17.6 9C18.5 3.2 26.6 3.2 27.6 9.6C25.5 7.4 20.5 7.2 17.6 9Z" fill="#cbd6e6"/><path d="M22.3 11.6H27.4V14H22.8Z" fill="#3456a8"/><path d="M20.5 16.5C21.5 18.6 24.5 18.8 26 16.8L25.5 20H20.8Z" fill="#5a6fa2"/><circle cx="13.5" cy="21" r="1.7" fill="#6d3be0"/><circle cx="38" cy="27.5" r="1.6" fill="#b04ad8"/><circle cx="35.5" cy="9" r="1.4" fill="#8a5ae0"/><circle cx="7.5" cy="36" r="2" fill="#4f8ff0"/><circle cx="29.5" cy="19" r="1.1" fill="#5f6ff0"/><circle cx="16" cy="37" r="1.1" fill="#5fb0f5"/><circle cx="19" cy="35" r="1" fill="#5fb0f5"/><circle cx="25" cy="36" r="1.1" fill="#6fc0f8"/><circle cx="28" cy="38" r="1" fill="#6fc0f8"/><circle cx="34.5" cy="18" r="1.0" fill="#a0c8f0"/><circle cx="36" cy="21" r="0.9" fill="#a0c8f0"/><circle cx="9" cy="12" r="0.8" fill="#bfe8e0"/><circle cx="12" cy="9" r="0.7" fill="#bfe8e0"/><circle cx="7" cy="17" r="0.7" fill="#bfe8e0"/><circle cx="33" cy="33" r="0.9" fill="#d8e0f0"/><path d="M32 13H41" stroke="#cfe6f0" stroke-width=".7"/></svg></div>
</div>
</body></html>
